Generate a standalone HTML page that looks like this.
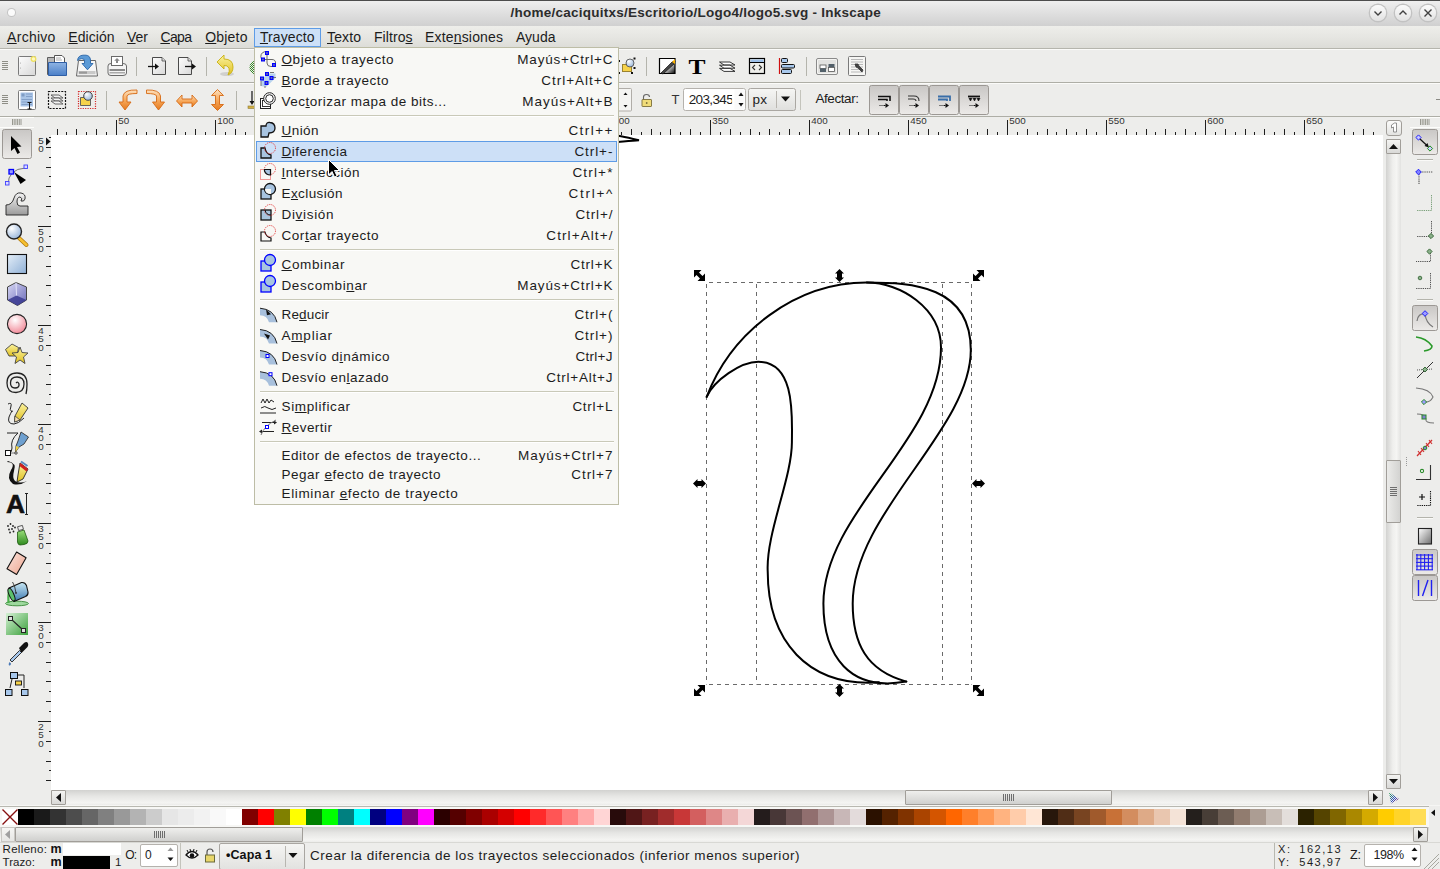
<!DOCTYPE html>
<html><head><meta charset="utf-8"><title>Inkscape</title>
<style>
html,body{margin:0;padding:0;width:1440px;height:869px;overflow:hidden;background:#ededeb;}
.r{position:absolute;box-sizing:border-box;}
svg.r{overflow:visible}
.t{position:absolute;white-space:nowrap;line-height:1;}
u{text-decoration:underline;text-underline-offset:1px;text-decoration-thickness:1px}
</style></head><body>
<div class="r" style="left:0px;top:0px;width:1440px;height:1px;background:#4d4d4d"></div>
<div class="r" style="left:0px;top:1px;width:1440px;height:25px;background:linear-gradient(#efefef,#e2e2e2 40%,#d0d0d0)"></div>
<div class="r" style="left:8px;top:9px;width:7px;height:7px;border-radius:50%;background:#fbfbfb;box-shadow:0 0 0 1px #c4c4c4"></div>
<div class="t" style="left:510.40px;top:5.87px;font-size:13.5px;font-weight:700;letter-spacing:0.251px;color:#2c2c2c;font-family:'Liberation Sans', sans-serif;">/home/caciquitxs/Escritorio/Logo4/logo5.svg - Inkscape</div>
<div class="r" style="left:1369.8px;top:5px;width:16px;height:16px;border-radius:50%;background:linear-gradient(#fbfbfb,#e2e2e2);box-shadow:0 0 0 1.4px #c2c2c2"></div>
<svg class="r" style="left:1367.8px;top:3px" width="20" height="20" viewBox="-10 -10 20 20"><path d="M-3.5,-1.5 L0,2 L3.5,-1.5" stroke="#404040" stroke-width="1.4" fill="none"/></svg>
<div class="r" style="left:1394.8px;top:5px;width:16px;height:16px;border-radius:50%;background:linear-gradient(#fbfbfb,#e2e2e2);box-shadow:0 0 0 1.4px #c2c2c2"></div>
<svg class="r" style="left:1392.8px;top:3px" width="20" height="20" viewBox="-10 -10 20 20"><path d="M-3.5,1.5 L0,-2 L3.5,1.5" stroke="#404040" stroke-width="1.4" fill="none"/></svg>
<div class="r" style="left:1419.8px;top:5px;width:16px;height:16px;border-radius:50%;background:linear-gradient(#fbfbfb,#e2e2e2);box-shadow:0 0 0 1.4px #c2c2c2"></div>
<svg class="r" style="left:1417.8px;top:3px" width="20" height="20" viewBox="-10 -10 20 20"><path d="M-3.5,-3.5 L3.5,3.5 M3.5,-3.5 L-3.5,3.5" stroke="#404040" stroke-width="1.4" fill="none"/></svg>
<div class="r" style="left:0px;top:26px;width:1440px;height:22px;background:linear-gradient(#eeeeea,#e6e6e2 50%,#dcdcd7)"></div>
<div class="r" style="left:0px;top:48px;width:1440px;height:1px;background:#b5b5ad"></div>
<div class="r" style="left:0px;top:49px;width:1440px;height:1px;background:#fbfbf9"></div>
<div class="r" style="left:254px;top:28px;width:67px;height:19px;background:#cde0f7;border:1px solid #5e9ce6"></div>
<div class="t" style="left:7.10px;top:30.15px;font-size:14px;font-weight:400;letter-spacing:0.269px;color:#1c1c1c;font-family:'Liberation Sans', sans-serif;"><u>A</u>rchivo</div>
<div class="t" style="left:68.30px;top:30.15px;font-size:14px;font-weight:400;letter-spacing:0.064px;color:#1c1c1c;font-family:'Liberation Sans', sans-serif;"><u>E</u>dición</div>
<div class="t" style="left:127.00px;top:30.15px;font-size:14px;font-weight:400;letter-spacing:-0.008px;color:#1c1c1c;font-family:'Liberation Sans', sans-serif;"><u>V</u>er</div>
<div class="t" style="left:160.40px;top:30.15px;font-size:14px;font-weight:400;letter-spacing:-0.623px;color:#1c1c1c;font-family:'Liberation Sans', sans-serif;"><u>C</u>apa</div>
<div class="t" style="left:205.20px;top:30.15px;font-size:14px;font-weight:400;letter-spacing:0.210px;color:#1c1c1c;font-family:'Liberation Sans', sans-serif;"><u>O</u>bjeto</div>
<div class="t" style="left:259.90px;top:30.15px;font-size:14px;font-weight:400;letter-spacing:0.094px;color:#1c1c1c;font-family:'Liberation Sans', sans-serif;"><u>T</u>rayecto</div>
<div class="t" style="left:327.00px;top:30.15px;font-size:14px;font-weight:400;letter-spacing:0.134px;color:#1c1c1c;font-family:'Liberation Sans', sans-serif;"><u>T</u>exto</div>
<div class="t" style="left:374.00px;top:30.15px;font-size:14px;font-weight:400;letter-spacing:0.065px;color:#1c1c1c;font-family:'Liberation Sans', sans-serif;">Filtro<u>s</u></div>
<div class="t" style="left:425.00px;top:30.15px;font-size:14px;font-weight:400;letter-spacing:0.173px;color:#1c1c1c;font-family:'Liberation Sans', sans-serif;">Exte<u>n</u>siones</div>
<div class="t" style="left:516.00px;top:30.15px;font-size:14px;font-weight:400;letter-spacing:0.014px;color:#1c1c1c;font-family:'Liberation Sans', sans-serif;">Ayuda</div>
<div class="r" style="left:0px;top:50px;width:1440px;height:32px;background:#ededeb"></div>
<div class="r" style="left:0px;top:82px;width:1440px;height:1px;background:#aeaea6"></div>
<div class="r" style="left:0px;top:83px;width:1440px;height:1px;background:#fbfbf9"></div>
<div class="r" style="left:0px;top:84px;width:1440px;height:32px;background:#ededeb"></div>
<div class="r" style="left:0px;top:116px;width:1440px;height:1px;background:#aeaea6"></div>
<div class="r" style="left:0px;top:117px;width:1440px;height:18px;background:#ededeb"></div>
<div class="r" style="left:0px;top:135px;width:51px;height:671px;background:#ededeb"></div>
<div class="r" style="left:51px;top:135px;width:1332px;height:655px;background:#ffffff"></div>
<div class="r" style="left:1383px;top:117px;width:57px;height:689px;background:#ededeb"></div>
<div class="r" style="left:0px;top:790px;width:1440px;height:79px;background:#ededeb"></div>
<svg class="r" style="left:0;top:0" width="1440" height="869"><g stroke="#1e1e1e" stroke-width="1"><line x1="57.5" y1="129" x2="57.5" y2="135" /><line x1="66.5" y1="132" x2="66.5" y2="135" /><line x1="76.5" y1="129" x2="76.5" y2="135" /><line x1="86.5" y1="132" x2="86.5" y2="135" /><line x1="96.5" y1="129" x2="96.5" y2="135" /><line x1="106.5" y1="132" x2="106.5" y2="135" /><line x1="116.5" y1="120" x2="116.5" y2="135" /><line x1="126.5" y1="132" x2="126.5" y2="135" /><line x1="136.5" y1="129" x2="136.5" y2="135" /><line x1="146.5" y1="132" x2="146.5" y2="135" /><line x1="156.5" y1="129" x2="156.5" y2="135" /><line x1="165.5" y1="132" x2="165.5" y2="135" /><line x1="175.5" y1="129" x2="175.5" y2="135" /><line x1="185.5" y1="132" x2="185.5" y2="135" /><line x1="195.5" y1="129" x2="195.5" y2="135" /><line x1="205.5" y1="132" x2="205.5" y2="135" /><line x1="215.5" y1="120" x2="215.5" y2="135" /><line x1="225.5" y1="132" x2="225.5" y2="135" /><line x1="235.5" y1="129" x2="235.5" y2="135" /><line x1="245.5" y1="132" x2="245.5" y2="135" /><line x1="255.5" y1="129" x2="255.5" y2="135" /><line x1="264.5" y1="132" x2="264.5" y2="135" /><line x1="274.5" y1="129" x2="274.5" y2="135" /><line x1="284.5" y1="132" x2="284.5" y2="135" /><line x1="294.5" y1="129" x2="294.5" y2="135" /><line x1="304.5" y1="132" x2="304.5" y2="135" /><line x1="314.5" y1="120" x2="314.5" y2="135" /><line x1="324.5" y1="132" x2="324.5" y2="135" /><line x1="334.5" y1="129" x2="334.5" y2="135" /><line x1="344.5" y1="132" x2="344.5" y2="135" /><line x1="354.5" y1="129" x2="354.5" y2="135" /><line x1="363.5" y1="132" x2="363.5" y2="135" /><line x1="373.5" y1="129" x2="373.5" y2="135" /><line x1="383.5" y1="132" x2="383.5" y2="135" /><line x1="393.5" y1="129" x2="393.5" y2="135" /><line x1="403.5" y1="132" x2="403.5" y2="135" /><line x1="413.5" y1="120" x2="413.5" y2="135" /><line x1="423.5" y1="132" x2="423.5" y2="135" /><line x1="433.5" y1="129" x2="433.5" y2="135" /><line x1="443.5" y1="132" x2="443.5" y2="135" /><line x1="453.5" y1="129" x2="453.5" y2="135" /><line x1="462.5" y1="132" x2="462.5" y2="135" /><line x1="472.5" y1="129" x2="472.5" y2="135" /><line x1="482.5" y1="132" x2="482.5" y2="135" /><line x1="492.5" y1="129" x2="492.5" y2="135" /><line x1="502.5" y1="132" x2="502.5" y2="135" /><line x1="512.5" y1="120" x2="512.5" y2="135" /><line x1="522.5" y1="132" x2="522.5" y2="135" /><line x1="532.5" y1="129" x2="532.5" y2="135" /><line x1="542.5" y1="132" x2="542.5" y2="135" /><line x1="552.5" y1="129" x2="552.5" y2="135" /><line x1="561.5" y1="132" x2="561.5" y2="135" /><line x1="571.5" y1="129" x2="571.5" y2="135" /><line x1="581.5" y1="132" x2="581.5" y2="135" /><line x1="591.5" y1="129" x2="591.5" y2="135" /><line x1="601.5" y1="132" x2="601.5" y2="135" /><line x1="611.5" y1="120" x2="611.5" y2="135" /><line x1="621.5" y1="132" x2="621.5" y2="135" /><line x1="631.5" y1="129" x2="631.5" y2="135" /><line x1="641.5" y1="132" x2="641.5" y2="135" /><line x1="651.5" y1="129" x2="651.5" y2="135" /><line x1="660.5" y1="132" x2="660.5" y2="135" /><line x1="670.5" y1="129" x2="670.5" y2="135" /><line x1="680.5" y1="132" x2="680.5" y2="135" /><line x1="690.5" y1="129" x2="690.5" y2="135" /><line x1="700.5" y1="132" x2="700.5" y2="135" /><line x1="710.5" y1="120" x2="710.5" y2="135" /><line x1="720.5" y1="132" x2="720.5" y2="135" /><line x1="730.5" y1="129" x2="730.5" y2="135" /><line x1="740.5" y1="132" x2="740.5" y2="135" /><line x1="750.5" y1="129" x2="750.5" y2="135" /><line x1="759.5" y1="132" x2="759.5" y2="135" /><line x1="769.5" y1="129" x2="769.5" y2="135" /><line x1="779.5" y1="132" x2="779.5" y2="135" /><line x1="789.5" y1="129" x2="789.5" y2="135" /><line x1="799.5" y1="132" x2="799.5" y2="135" /><line x1="809.5" y1="120" x2="809.5" y2="135" /><line x1="819.5" y1="132" x2="819.5" y2="135" /><line x1="829.5" y1="129" x2="829.5" y2="135" /><line x1="839.5" y1="132" x2="839.5" y2="135" /><line x1="849.5" y1="129" x2="849.5" y2="135" /><line x1="858.5" y1="132" x2="858.5" y2="135" /><line x1="868.5" y1="129" x2="868.5" y2="135" /><line x1="878.5" y1="132" x2="878.5" y2="135" /><line x1="888.5" y1="129" x2="888.5" y2="135" /><line x1="898.5" y1="132" x2="898.5" y2="135" /><line x1="908.5" y1="120" x2="908.5" y2="135" /><line x1="918.5" y1="132" x2="918.5" y2="135" /><line x1="928.5" y1="129" x2="928.5" y2="135" /><line x1="938.5" y1="132" x2="938.5" y2="135" /><line x1="948.5" y1="129" x2="948.5" y2="135" /><line x1="957.5" y1="132" x2="957.5" y2="135" /><line x1="967.5" y1="129" x2="967.5" y2="135" /><line x1="977.5" y1="132" x2="977.5" y2="135" /><line x1="987.5" y1="129" x2="987.5" y2="135" /><line x1="997.5" y1="132" x2="997.5" y2="135" /><line x1="1007.5" y1="120" x2="1007.5" y2="135" /><line x1="1017.5" y1="132" x2="1017.5" y2="135" /><line x1="1027.5" y1="129" x2="1027.5" y2="135" /><line x1="1037.5" y1="132" x2="1037.5" y2="135" /><line x1="1047.5" y1="129" x2="1047.5" y2="135" /><line x1="1056.5" y1="132" x2="1056.5" y2="135" /><line x1="1066.5" y1="129" x2="1066.5" y2="135" /><line x1="1076.5" y1="132" x2="1076.5" y2="135" /><line x1="1086.5" y1="129" x2="1086.5" y2="135" /><line x1="1096.5" y1="132" x2="1096.5" y2="135" /><line x1="1106.5" y1="120" x2="1106.5" y2="135" /><line x1="1116.5" y1="132" x2="1116.5" y2="135" /><line x1="1126.5" y1="129" x2="1126.5" y2="135" /><line x1="1136.5" y1="132" x2="1136.5" y2="135" /><line x1="1146.5" y1="129" x2="1146.5" y2="135" /><line x1="1155.5" y1="132" x2="1155.5" y2="135" /><line x1="1165.5" y1="129" x2="1165.5" y2="135" /><line x1="1175.5" y1="132" x2="1175.5" y2="135" /><line x1="1185.5" y1="129" x2="1185.5" y2="135" /><line x1="1195.5" y1="132" x2="1195.5" y2="135" /><line x1="1205.5" y1="120" x2="1205.5" y2="135" /><line x1="1215.5" y1="132" x2="1215.5" y2="135" /><line x1="1225.5" y1="129" x2="1225.5" y2="135" /><line x1="1235.5" y1="132" x2="1235.5" y2="135" /><line x1="1245.5" y1="129" x2="1245.5" y2="135" /><line x1="1254.5" y1="132" x2="1254.5" y2="135" /><line x1="1264.5" y1="129" x2="1264.5" y2="135" /><line x1="1274.5" y1="132" x2="1274.5" y2="135" /><line x1="1284.5" y1="129" x2="1284.5" y2="135" /><line x1="1294.5" y1="132" x2="1294.5" y2="135" /><line x1="1304.5" y1="120" x2="1304.5" y2="135" /><line x1="1314.5" y1="132" x2="1314.5" y2="135" /><line x1="1324.5" y1="129" x2="1324.5" y2="135" /><line x1="1334.5" y1="132" x2="1334.5" y2="135" /><line x1="1344.5" y1="129" x2="1344.5" y2="135" /><line x1="1353.5" y1="132" x2="1353.5" y2="135" /><line x1="1363.5" y1="129" x2="1363.5" y2="135" /><line x1="1373.5" y1="132" x2="1373.5" y2="135" /></g></svg>
<div class="t" style="left:118.30px;top:116.30px;font-size:9.8px;font-weight:400;letter-spacing:-0.061px;color:#333;font-family:'Liberation Sans', sans-serif;">50</div>
<div class="t" style="left:217.30px;top:116.30px;font-size:9.8px;font-weight:400;letter-spacing:0.054px;color:#333;font-family:'Liberation Sans', sans-serif;">100</div>
<div class="t" style="left:316.30px;top:116.30px;font-size:9.8px;font-weight:400;letter-spacing:0.054px;color:#333;font-family:'Liberation Sans', sans-serif;">150</div>
<div class="t" style="left:415.30px;top:116.30px;font-size:9.8px;font-weight:400;letter-spacing:0.054px;color:#333;font-family:'Liberation Sans', sans-serif;">200</div>
<div class="t" style="left:514.30px;top:116.30px;font-size:9.8px;font-weight:400;letter-spacing:0.054px;color:#333;font-family:'Liberation Sans', sans-serif;">250</div>
<div class="t" style="left:613.30px;top:116.30px;font-size:9.8px;font-weight:400;letter-spacing:0.054px;color:#333;font-family:'Liberation Sans', sans-serif;">300</div>
<div class="t" style="left:712.30px;top:116.30px;font-size:9.8px;font-weight:400;letter-spacing:0.054px;color:#333;font-family:'Liberation Sans', sans-serif;">350</div>
<div class="t" style="left:811.30px;top:116.30px;font-size:9.8px;font-weight:400;letter-spacing:0.054px;color:#333;font-family:'Liberation Sans', sans-serif;">400</div>
<div class="t" style="left:910.30px;top:116.30px;font-size:9.8px;font-weight:400;letter-spacing:0.054px;color:#333;font-family:'Liberation Sans', sans-serif;">450</div>
<div class="t" style="left:1009.30px;top:116.30px;font-size:9.8px;font-weight:400;letter-spacing:0.054px;color:#333;font-family:'Liberation Sans', sans-serif;">500</div>
<div class="t" style="left:1108.30px;top:116.30px;font-size:9.8px;font-weight:400;letter-spacing:0.054px;color:#333;font-family:'Liberation Sans', sans-serif;">550</div>
<div class="t" style="left:1207.30px;top:116.30px;font-size:9.8px;font-weight:400;letter-spacing:0.054px;color:#333;font-family:'Liberation Sans', sans-serif;">600</div>
<div class="t" style="left:1306.30px;top:116.30px;font-size:9.8px;font-weight:400;letter-spacing:0.054px;color:#333;font-family:'Liberation Sans', sans-serif;">650</div>
<svg class="r" style="left:0;top:0" width="1440" height="869"><g stroke="#1e1e1e" stroke-width="1"><line x1="49" y1="137.5" x2="51" y2="137.5" /><line x1="46" y1="147.5" x2="51" y2="147.5" /><line x1="49" y1="157.5" x2="51" y2="157.5" /><line x1="46" y1="167.5" x2="51" y2="167.5" /><line x1="49" y1="176.5" x2="51" y2="176.5" /><line x1="46" y1="186.5" x2="51" y2="186.5" /><line x1="49" y1="196.5" x2="51" y2="196.5" /><line x1="46" y1="206.5" x2="51" y2="206.5" /><line x1="49" y1="216.5" x2="51" y2="216.5" /><line x1="38" y1="226.5" x2="51" y2="226.5" /><line x1="49" y1="236.5" x2="51" y2="236.5" /><line x1="46" y1="246.5" x2="51" y2="246.5" /><line x1="49" y1="256.5" x2="51" y2="256.5" /><line x1="46" y1="266.5" x2="51" y2="266.5" /><line x1="49" y1="275.5" x2="51" y2="275.5" /><line x1="46" y1="285.5" x2="51" y2="285.5" /><line x1="49" y1="295.5" x2="51" y2="295.5" /><line x1="46" y1="305.5" x2="51" y2="305.5" /><line x1="49" y1="315.5" x2="51" y2="315.5" /><line x1="38" y1="325.5" x2="51" y2="325.5" /><line x1="49" y1="335.5" x2="51" y2="335.5" /><line x1="46" y1="345.5" x2="51" y2="345.5" /><line x1="49" y1="355.5" x2="51" y2="355.5" /><line x1="46" y1="365.5" x2="51" y2="365.5" /><line x1="49" y1="374.5" x2="51" y2="374.5" /><line x1="46" y1="384.5" x2="51" y2="384.5" /><line x1="49" y1="394.5" x2="51" y2="394.5" /><line x1="46" y1="404.5" x2="51" y2="404.5" /><line x1="49" y1="414.5" x2="51" y2="414.5" /><line x1="38" y1="424.5" x2="51" y2="424.5" /><line x1="49" y1="434.5" x2="51" y2="434.5" /><line x1="46" y1="444.5" x2="51" y2="444.5" /><line x1="49" y1="454.5" x2="51" y2="454.5" /><line x1="46" y1="464.5" x2="51" y2="464.5" /><line x1="49" y1="473.5" x2="51" y2="473.5" /><line x1="46" y1="483.5" x2="51" y2="483.5" /><line x1="49" y1="493.5" x2="51" y2="493.5" /><line x1="46" y1="503.5" x2="51" y2="503.5" /><line x1="49" y1="513.5" x2="51" y2="513.5" /><line x1="38" y1="523.5" x2="51" y2="523.5" /><line x1="49" y1="533.5" x2="51" y2="533.5" /><line x1="46" y1="543.5" x2="51" y2="543.5" /><line x1="49" y1="553.5" x2="51" y2="553.5" /><line x1="46" y1="563.5" x2="51" y2="563.5" /><line x1="49" y1="572.5" x2="51" y2="572.5" /><line x1="46" y1="582.5" x2="51" y2="582.5" /><line x1="49" y1="592.5" x2="51" y2="592.5" /><line x1="46" y1="602.5" x2="51" y2="602.5" /><line x1="49" y1="612.5" x2="51" y2="612.5" /><line x1="38" y1="622.5" x2="51" y2="622.5" /><line x1="49" y1="632.5" x2="51" y2="632.5" /><line x1="46" y1="642.5" x2="51" y2="642.5" /><line x1="49" y1="652.5" x2="51" y2="652.5" /><line x1="46" y1="662.5" x2="51" y2="662.5" /><line x1="49" y1="671.5" x2="51" y2="671.5" /><line x1="46" y1="681.5" x2="51" y2="681.5" /><line x1="49" y1="691.5" x2="51" y2="691.5" /><line x1="46" y1="701.5" x2="51" y2="701.5" /><line x1="49" y1="711.5" x2="51" y2="711.5" /><line x1="38" y1="721.5" x2="51" y2="721.5" /><line x1="49" y1="731.5" x2="51" y2="731.5" /><line x1="46" y1="741.5" x2="51" y2="741.5" /><line x1="49" y1="751.5" x2="51" y2="751.5" /><line x1="46" y1="761.5" x2="51" y2="761.5" /><line x1="49" y1="770.5" x2="51" y2="770.5" /><line x1="46" y1="780.5" x2="51" y2="780.5" /></g></svg>
<div class="t" style="left:38.30px;top:227.30px;font-size:9.8px;font-weight:400;letter-spacing:0.000px;color:#333;font-family:'Liberation Sans', sans-serif;">5</div>
<div class="t" style="left:38.30px;top:235.40px;font-size:9.8px;font-weight:400;letter-spacing:0.000px;color:#333;font-family:'Liberation Sans', sans-serif;">0</div>
<div class="t" style="left:38.30px;top:243.50px;font-size:9.8px;font-weight:400;letter-spacing:0.000px;color:#333;font-family:'Liberation Sans', sans-serif;">0</div>
<div class="t" style="left:38.30px;top:326.30px;font-size:9.8px;font-weight:400;letter-spacing:0.000px;color:#333;font-family:'Liberation Sans', sans-serif;">4</div>
<div class="t" style="left:38.30px;top:334.40px;font-size:9.8px;font-weight:400;letter-spacing:0.000px;color:#333;font-family:'Liberation Sans', sans-serif;">5</div>
<div class="t" style="left:38.30px;top:342.50px;font-size:9.8px;font-weight:400;letter-spacing:0.000px;color:#333;font-family:'Liberation Sans', sans-serif;">0</div>
<div class="t" style="left:38.30px;top:425.30px;font-size:9.8px;font-weight:400;letter-spacing:0.000px;color:#333;font-family:'Liberation Sans', sans-serif;">4</div>
<div class="t" style="left:38.30px;top:433.40px;font-size:9.8px;font-weight:400;letter-spacing:0.000px;color:#333;font-family:'Liberation Sans', sans-serif;">0</div>
<div class="t" style="left:38.30px;top:441.50px;font-size:9.8px;font-weight:400;letter-spacing:0.000px;color:#333;font-family:'Liberation Sans', sans-serif;">0</div>
<div class="t" style="left:38.30px;top:524.30px;font-size:9.8px;font-weight:400;letter-spacing:0.000px;color:#333;font-family:'Liberation Sans', sans-serif;">3</div>
<div class="t" style="left:38.30px;top:532.40px;font-size:9.8px;font-weight:400;letter-spacing:0.000px;color:#333;font-family:'Liberation Sans', sans-serif;">5</div>
<div class="t" style="left:38.30px;top:540.50px;font-size:9.8px;font-weight:400;letter-spacing:0.000px;color:#333;font-family:'Liberation Sans', sans-serif;">0</div>
<div class="t" style="left:38.30px;top:623.30px;font-size:9.8px;font-weight:400;letter-spacing:0.000px;color:#333;font-family:'Liberation Sans', sans-serif;">3</div>
<div class="t" style="left:38.30px;top:631.40px;font-size:9.8px;font-weight:400;letter-spacing:0.000px;color:#333;font-family:'Liberation Sans', sans-serif;">0</div>
<div class="t" style="left:38.30px;top:639.50px;font-size:9.8px;font-weight:400;letter-spacing:0.000px;color:#333;font-family:'Liberation Sans', sans-serif;">0</div>
<div class="t" style="left:38.30px;top:722.30px;font-size:9.8px;font-weight:400;letter-spacing:0.000px;color:#333;font-family:'Liberation Sans', sans-serif;">2</div>
<div class="t" style="left:38.30px;top:730.40px;font-size:9.8px;font-weight:400;letter-spacing:0.000px;color:#333;font-family:'Liberation Sans', sans-serif;">5</div>
<div class="t" style="left:38.30px;top:738.50px;font-size:9.8px;font-weight:400;letter-spacing:0.000px;color:#333;font-family:'Liberation Sans', sans-serif;">0</div>
<div class="t" style="left:38.30px;top:135.90px;font-size:9.8px;font-weight:400;letter-spacing:0.000px;color:#333;font-family:'Liberation Sans', sans-serif;">5</div>
<div class="t" style="left:38.30px;top:144.10px;font-size:9.8px;font-weight:400;letter-spacing:0.000px;color:#333;font-family:'Liberation Sans', sans-serif;">0</div>
<svg class="r" style="left:0;top:0" width="60" height="160"><path d="M46,137.5 L50.5,141.5 L46,145.5 Z" fill="#111"/></svg>
<svg class="r" style="left:0;top:0" width="1440" height="869"><g stroke="#6a6a6a" stroke-width="1" stroke-dasharray="4,4" fill="none"><line x1="706.5" y1="282.5" x2="971.5" y2="282.5" stroke-dashoffset="5.5"/><line x1="706.5" y1="684.5" x2="971.5" y2="684.5" stroke-dashoffset="5.5"/><line x1="706.5" y1="282.5" x2="706.5" y2="684.5" stroke-dashoffset="6.5"/><line x1="756.5" y1="282.5" x2="756.5" y2="684.5" stroke-dashoffset="6.5"/><line x1="942.5" y1="282.5" x2="942.5" y2="684.5" stroke-dashoffset="6.5"/><line x1="971.5" y1="282.5" x2="971.5" y2="684.5" stroke-dashoffset="6.5"/></g><g stroke="#000" stroke-width="2" fill="none" stroke-linecap="round"><path d="M706.7,396.8 C731.6,331.3 795.9,282.5 866.8,282.5 C899.6,282.5 941.0,307.6 941.0,347.5 C941.0,439.2 823.4,512.4 823.4,603.6 C823.4,656.4 849.8,691.8 906.3,681.6" /><path d="M866.8,282.5 C912.2,282.5 970.8,285.9 970.8,350.0 C970.8,430.5 852.7,512.9 852.7,603.6 C852.7,643.2 866.1,670.6 906.3,681.6" /><path d="M706.7,396.8 C713.9,380.5 740.6,361.8 758.4,361.8 C796.1,361.8 791.9,418.0 791.9,442.2 C791.9,478.0 766.0,533.3 767.7,571.1 C767.7,640.8 807.6,687.3 878.9,682.3" /></g><path d="M618,135.8 C626,137 633,139 639,140.3 C633,140.6 626,141.3 618,142" stroke="#000" stroke-width="2" fill="none"/></svg>
<svg class="r" style="left:0;top:0" width="1440" height="869"><g transform="translate(699.5,275.5) rotate(0)"><path d="M-5.5,-5.5 L2,-5.5 L-0.5,-3 L3,0.5 L5.5,-2 L5.5,5.5 L-2,5.5 L0.5,3 L-3,-0.5 L-5.5,2 Z" fill="#000"/></g><g transform="translate(978.5,275.5) rotate(90)"><path d="M-5.5,-5.5 L2,-5.5 L-0.5,-3 L3,0.5 L5.5,-2 L5.5,5.5 L-2,5.5 L0.5,3 L-3,-0.5 L-5.5,2 Z" fill="#000"/></g><g transform="translate(699.5,690.5) rotate(90)"><path d="M-5.5,-5.5 L2,-5.5 L-0.5,-3 L3,0.5 L5.5,-2 L5.5,5.5 L-2,5.5 L0.5,3 L-3,-0.5 L-5.5,2 Z" fill="#000"/></g><g transform="translate(978.5,690.5) rotate(0)"><path d="M-5.5,-5.5 L2,-5.5 L-0.5,-3 L3,0.5 L5.5,-2 L5.5,5.5 L-2,5.5 L0.5,3 L-3,-0.5 L-5.5,2 Z" fill="#000"/></g><g transform="translate(839.5,275.5) rotate(0)"><path d="M0,-6.5 L4.5,-2 L2.5,-2 L2.5,2 L4.5,2 L0,6.5 L-4.5,2 L-2.5,2 L-2.5,-2 L-4.5,-2 Z" fill="#000"/></g><g transform="translate(839.5,690.5) rotate(0)"><path d="M0,-6.5 L4.5,-2 L2.5,-2 L2.5,2 L4.5,2 L0,6.5 L-4.5,2 L-2.5,2 L-2.5,-2 L-4.5,-2 Z" fill="#000"/></g><g transform="translate(699.5,483.5) rotate(90)"><path d="M0,-6.5 L4.5,-2 L2.5,-2 L2.5,2 L4.5,2 L0,6.5 L-4.5,2 L-2.5,2 L-2.5,-2 L-4.5,-2 Z" fill="#000"/></g><g transform="translate(978.5,483.5) rotate(90)"><path d="M0,-6.5 L4.5,-2 L2.5,-2 L2.5,2 L4.5,2 L0,6.5 L-4.5,2 L-2.5,2 L-2.5,-2 L-4.5,-2 Z" fill="#000"/></g></svg>
<svg class="r" style="left:0;top:0" width="1440" height="869"><defs>
<linearGradient id="gPaper" x1="0" y1="0" x2="1" y2="1"><stop offset="0" stop-color="#fdfdfd"/><stop offset="1" stop-color="#d8d8d8"/></linearGradient>
<linearGradient id="gBlue" x1="0" y1="0" x2="0" y2="1"><stop offset="0" stop-color="#8fb4e3"/><stop offset="1" stop-color="#4a7fc8"/></linearGradient>
<linearGradient id="gBlueL" x1="0" y1="0" x2="1" y2="1"><stop offset="0" stop-color="#e4eef8"/><stop offset="1" stop-color="#8fb0d6"/></linearGradient>
<linearGradient id="gOrange" x1="0" y1="0" x2="0" y2="1"><stop offset="0" stop-color="#fde2c0"/><stop offset="0.5" stop-color="#f7a95c"/><stop offset="1" stop-color="#e57a1e"/></linearGradient>
<linearGradient id="gYellow" x1="0" y1="0" x2="0" y2="1"><stop offset="0" stop-color="#fbf3a0"/><stop offset="1" stop-color="#e0c020"/></linearGradient>
<linearGradient id="gBtn" x1="0" y1="0" x2="0" y2="1"><stop offset="0" stop-color="#c9c7c5"/><stop offset="1" stop-color="#eceae8"/></linearGradient>
<linearGradient id="gGray" x1="0" y1="0" x2="0" y2="1"><stop offset="0" stop-color="#f4f4f4"/><stop offset="1" stop-color="#9a9a9a"/></linearGradient>
<linearGradient id="gPurple" x1="0" y1="0" x2="1" y2="1"><stop offset="0" stop-color="#d8d8f4"/><stop offset="1" stop-color="#6a6ab8"/></linearGradient>
<radialGradient id="gPink" cx="0.4" cy="0.3" r="0.8"><stop offset="0" stop-color="#ffffff"/><stop offset="1" stop-color="#f07c8c"/></radialGradient>
<radialGradient id="gLens" cx="0.35" cy="0.3" r="0.8"><stop offset="0" stop-color="#ffffff"/><stop offset="1" stop-color="#90b0d8"/></radialGradient>
<linearGradient id="gGreen" x1="0" y1="0" x2="1" y2="1"><stop offset="0" stop-color="#d4f0d4"/><stop offset="1" stop-color="#3aa03a"/></linearGradient>
<linearGradient id="gGreen2" x1="0" y1="0" x2="0" y2="1"><stop offset="0" stop-color="#9ce07c"/><stop offset="1" stop-color="#2e8a1e"/></linearGradient>
<linearGradient id="gBW" x1="0" y1="0" x2="1" y2="1"><stop offset="0" stop-color="#ffffff"/><stop offset="0.5" stop-color="#ffffff"/><stop offset="1" stop-color="#000000"/></linearGradient>
<pattern id="chkG" x="0" y="0" width="2" height="2" patternUnits="userSpaceOnUse"><rect width="1" height="1" fill="#3a8a2a"/><rect x="1" y="1" width="1" height="1" fill="#3a8a2a"/></pattern>
<linearGradient id="gPage" x1="0" y1="0" x2="1" y2="1"><stop offset="0" stop-color="#ffffff"/><stop offset="1" stop-color="#6e6e6e"/></linearGradient>
<linearGradient id="gBtnH" x1="0" y1="0" x2="0" y2="1"><stop offset="0" stop-color="#f6f6f4"/><stop offset="1" stop-color="#dfdfdd"/></linearGradient></defs><line x1="2" y1="61.5" x2="8" y2="61.5" stroke="#8e8e86" stroke-width="1"/><line x1="2" y1="63.5" x2="8" y2="63.5" stroke="#8e8e86" stroke-width="1"/><line x1="2" y1="65.5" x2="8" y2="65.5" stroke="#8e8e86" stroke-width="1"/><line x1="2" y1="67.5" x2="8" y2="67.5" stroke="#8e8e86" stroke-width="1"/><line x1="2" y1="69.5" x2="8" y2="69.5" stroke="#8e8e86" stroke-width="1"/><line x1="2" y1="95.5" x2="8" y2="95.5" stroke="#8e8e86" stroke-width="1"/><line x1="2" y1="97.5" x2="8" y2="97.5" stroke="#8e8e86" stroke-width="1"/><line x1="2" y1="99.5" x2="8" y2="99.5" stroke="#8e8e86" stroke-width="1"/><line x1="2" y1="101.5" x2="8" y2="101.5" stroke="#8e8e86" stroke-width="1"/><line x1="2" y1="103.5" x2="8" y2="103.5" stroke="#8e8e86" stroke-width="1"/><rect x="18.5" y="56.5" width="17" height="19" rx="1" fill="url(#gPaper)" stroke="#7a7a7a"/><circle cx="33.5" cy="59" r="2.3" fill="#fff8c0" stroke="#ede060" stroke-width="1.3"/><circle cx="20.5" cy="63" r="0.5" fill="#999"/><circle cx="20.5" cy="68" r="0.5" fill="#999"/><path d="M47.5,57.5 L55.5,57.5 L55.5,74.5 L47.5,74.5 Z" fill="#b8b8b8" stroke="#5e5e5e"/><path d="M54.5,55.5 L62,55.5 L64.5,58 L64.5,64 L54.5,64 Z" fill="#fff" stroke="#555"/><path d="M56,58 L61,58 M56,60 L62,60" stroke="#999" stroke-width="0.8"/><path d="M48.5,62.5 L66.5,62.5 L66.5,75.5 L48.5,75.5 Z" fill="url(#gBlue)" stroke="#2f5fa6"/><path d="M78.5,60.5 L95.5,60.5 L97.5,76 L76.5,76 Z" fill="#f6f6f6" stroke="#666" stroke-width="1"/><rect x="78.5" y="71" width="17" height="3.2" fill="#c8c8c8"/><rect x="79" y="71.5" width="8" height="2.2" fill="#999"/><path d="M77.5,60.5 Q78,55.5 83,55.2 L86,55.2 Q90,55.5 90.5,60 L90.5,63.5 L93,63.5 L87.5,69.8 L82,63.5 L84.5,63.5 L84.5,60.5 Q84,58.5 81.5,58.7 Q79,59 77.5,60.5 Z" fill="#5b9ad6" stroke="#2a65a8" stroke-width="0.9"/><path d="M108,66 Q108,63.5 111,63.5 L123,63.5 Q126.5,63.5 126.5,66 L126.5,73 Q126.5,75.5 123,75.5 L111,75.5 Q108,75.5 108,73 Z" fill="#f4f4f4" stroke="#6a6a6a" stroke-width="1"/><rect x="109.5" y="69" width="15.5" height="2" fill="#8a8a8a"/><rect x="109.5" y="72" width="15.5" height="1.5" fill="#aaa"/><rect x="111.5" y="56.5" width="11" height="9" fill="#fff" stroke="#6a6a6a"/><path d="M117,58 L119.8,60.8 L118,60.8 L118,63 L116,63 L116,60.8 L114.2,60.8 Z" fill="#888"/><line x1="136.5" y1="57" x2="136.5" y2="76" stroke="#b4b4ac"/><line x1="206.5" y1="57" x2="206.5" y2="76" stroke="#b4b4ac"/><path d="M152.5,57.5 L162,57.5 L165.5,61 L165.5,74.5 L152.5,74.5 Z" fill="url(#gPaper)" stroke="#4a4a4a"/><path d="M162,57.5 L162,61 L165.5,61" fill="#ddd" stroke="#4a4a4a" stroke-width="0.8"/><path d="M148,66.5 L156,66.5" stroke="#111" stroke-width="1.3"/><path d="M155,63.5 L159,66.5 L155,69.5 Z" fill="#111"/><path d="M178.5,57.5 L188,57.5 L191.5,61 L191.5,74.5 L178.5,74.5 Z" fill="url(#gPaper)" stroke="#4a4a4a"/><path d="M188,57.5 L188,61 L191.5,61" fill="#ddd" stroke="#4a4a4a" stroke-width="0.8"/><path d="M185,66.5 L193,66.5" stroke="#111" stroke-width="1.3"/><path d="M192,63.5 L196,66.5 L192,69.5 Z" fill="#111"/><ellipse cx="227" cy="74" rx="7" ry="2" fill="#000" opacity="0.12"/><path d="M217,62 L224,55 L224,59 Q233,59 233,67 Q233,73 228,75 Q230,71 229,68 Q227,65 224,65.5 L224,69 Z" fill="url(#gYellow)" stroke="#c8b010" stroke-width="0.9"/><path d="M255,60.5 Q249.5,62 249.5,67.5 Q249.5,73 255,74.5 Z" fill="url(#chkG)"/><rect x="18.5" y="90.5" width="17" height="19" rx="1" fill="#fff" stroke="#7a7a7a"/><rect x="20.5" y="92.5" width="12.5" height="14" fill="#a9c4e6"/><rect x="21.5" y="93.5" width="3" height="3" fill="#7f9cc4"/><line x1="26" y1="94" x2="32" y2="94" stroke="#7f9cc4" stroke-width="0.9"/><line x1="26" y1="96.5" x2="32" y2="96.5" stroke="#7f9cc4" stroke-width="0.9"/><line x1="21.5" y1="99.5" x2="32" y2="99.5" stroke="#7f9cc4" stroke-width="0.9"/><line x1="21.5" y1="102" x2="32" y2="102" stroke="#7f9cc4" stroke-width="0.9"/><line x1="21.5" y1="104.5" x2="32" y2="104.5" stroke="#7f9cc4" stroke-width="0.9"/><path d="M27.5,102.5 L31.5,102.5 M29.5,102.5 L29.5,109 M27.5,109 L31.5,109" stroke="#111" stroke-width="1"/><rect x="48.5" y="91.5" width="17" height="17" fill="none" stroke="#111" stroke-width="1.2" stroke-dasharray="2,1.2"/><path d="M51,95 L59,95 L63,98 L55,98 Z" fill="#f4f4f4" stroke="#555" stroke-width="0.9"/><path d="M51,98 L59,98 L63,101 L55,101 Z" fill="#f4f4f4" stroke="#555" stroke-width="0.9"/><path d="M51,101 L59,101 L63,104 L55,104 Z" fill="#f4f4f4" stroke="#555" stroke-width="0.9"/><rect x="78.5" y="91.5" width="17" height="17" fill="none" stroke="#d42a2a" stroke-width="1.2" stroke-dasharray="1.2,1.2"/><path d="M80.5,97.5 L85,97.5 L86,99.5 L90.5,99.5 L90.5,105.5 L80.5,105.5 Z" fill="#f6d24a" stroke="#555" stroke-width="0.9"/><circle cx="88" cy="96" r="4.3" fill="url(#gLens)" stroke="#444" stroke-width="1"/><line x1="106.5" y1="91" x2="106.5" y2="110" stroke="#b4b4ac"/><line x1="236.5" y1="91" x2="236.5" y2="110" stroke="#b4b4ac"/><path d="M137,90 Q124,89.5 123,96 L123,102 L119,102 L125,110 L131,102 L127,102 L127,96 Q127.5,93.5 137,93.5 Z" fill="url(#gOrange)" stroke="#d66a14" stroke-width="0.9"/><path d="M146.5,90 Q159.5,89.5 160.5,96 L160.5,102 L164.5,102 L158.5,110 L152.5,102 L156.5,102 L156.5,96 Q156,93.5 146.5,93.5 Z" fill="url(#gOrange)" stroke="#d66a14" stroke-width="0.9"/><path d="M176.5,101 L182,95 L182,99 L192,99 L192,95 L197.5,101 L192,107 L192,103 L182,103 L182,107 Z" fill="url(#gOrange)" stroke="#d66a14" stroke-width="0.9"/><path d="M217.5,89.5 L223.5,95.5 L219.5,95.5 L219.5,104.5 L223.5,104.5 L217.5,110.5 L211.5,104.5 L215.5,104.5 L215.5,95.5 L211.5,95.5 Z" fill="url(#gOrange)" stroke="#d66a14" stroke-width="0.9"/><line x1="252" y1="91" x2="252" y2="103" stroke="#111" stroke-width="1.2"/><path d="M249.5,101 L252,105 L254.5,101 Z" fill="#111"/><rect x="248" y="106" width="7" height="2.5" fill="#d4b040" stroke="#8a7a3a" stroke-width="0.6"/><rect x="0" y="117" width="34" height="1" fill="#fdfdfb"/><rect x="0" y="127" width="34" height="1" fill="#fdfdfb"/><line x1="12.5" y1="119" x2="12.5" y2="125" stroke="#8e8e86" stroke-width="0.9"/><line x1="14.2" y1="119" x2="14.2" y2="125" stroke="#8e8e86" stroke-width="0.9"/><line x1="15.9" y1="119" x2="15.9" y2="125" stroke="#8e8e86" stroke-width="0.9"/><line x1="17.6" y1="119" x2="17.6" y2="125" stroke="#8e8e86" stroke-width="0.9"/><line x1="19.3" y1="119" x2="19.3" y2="125" stroke="#8e8e86" stroke-width="0.9"/><line x1="21.0" y1="119" x2="21.0" y2="125" stroke="#8e8e86" stroke-width="0.9"/><rect x="2.5" y="129.5" width="29" height="29" rx="2" fill="url(#gBtn)" stroke="#9c9894"/><path d="M11,136 L11,151 L14.5,148 L17.5,154 L20,152.5 L17,147 L21.5,146.5 Z" fill="#000"/><path d="M8,185 Q8,169 25.5,168" stroke="#777" stroke-width="1" fill="none"/><rect x="9" y="169.5" width="4.5" height="4.5" fill="#9c9cff" stroke="#0000ff" stroke-width="1.3"/><rect x="24" y="165" width="3.5" height="3.5" fill="#dcdcff" stroke="#4040ff" stroke-width="0.9"/><rect x="5.5" y="181.5" width="3.5" height="3.5" fill="#dcdcff" stroke="#4040ff" stroke-width="0.9"/><path d="M14,172 L26,180 L20.5,184 Z" fill="#000"/><path d="M6,205 Q12,205 14,198 Q16,192 21,193 Q26,194 25,199 Q24,202 21,201 Q23,198 20,197 Q17,197 17,202 Q17,206 20,206 L28,206 L28,215 L6,215 Z" fill="url(#gGray)" stroke="#222" stroke-width="0.9"/><line x1="19" y1="238" x2="26.5" y2="245" stroke="#b07a10" stroke-width="4" stroke-linecap="round"/><line x1="19" y1="238" x2="26.5" y2="245" stroke="#f6c030" stroke-width="2.4" stroke-linecap="round"/><circle cx="14" cy="231.5" r="7.5" fill="url(#gLens)" stroke="#222" stroke-width="1.4"/><rect x="7.5" y="254.5" width="19" height="19" fill="url(#gBlueL)" stroke="#111" stroke-width="1.1"/><path d="M16,282.5 L26.5,287 L26.5,300 L17.5,305.5 L7.5,300 L7.5,287 Z" fill="url(#gPurple)" stroke="#444" stroke-width="1"/><path d="M17.5,305.5 L26.5,300 L16.5,295.5 L7.5,300 Z" fill="#3a3a90" opacity="0.85"/><path d="M16,282.5 L16.5,295.5" stroke="#f0f0ff" stroke-width="0.8"/><circle cx="17" cy="324" r="9.6" fill="url(#gPink)" stroke="#222" stroke-width="1.1"/><path d="M5.5,349.5 L12,344 L18.5,347.5 L17,356 L9,356 Z" fill="url(#gYellow)" stroke="#444" stroke-width="0.9"/><path d="M20,347 L22,352.5 L28,353 L23.5,357 L25,363.5 L20,360 L15,363.5 L16.5,357 L12,353 L18,352.5 Z" fill="url(#gYellow)" stroke="#444" stroke-width="0.9"/><path d="M16,383 Q18,381 19,384 Q19.5,388 15,388 Q10.5,388 10.5,383 Q10.5,377 17,377 Q24,377 24,384 Q24,392 16,392.5 Q7,392.5 7,383 Q7,373 17,373 Q27,373 27,384 Q27,390 26,394" fill="none" stroke="#222" stroke-width="1.3"/><path d="M8,404 Q12,402 11,406 Q9,410 12,412 Q13,408 9,417 Q7,424 14,424 Q18,424 24,418" fill="none" stroke="#222" stroke-width="1"/><path d="M22,403 L28,408 L20,420 L14.5,422 L15,416 Z" fill="url(#gYellow)" stroke="#333" stroke-width="0.9"/><path d="M14.5,422 L15,416 L20,420 Z" fill="#f6e0b0" stroke="#333" stroke-width="0.7"/><path d="M7,433 L18,433 Q10,440 12,448 Q12,452 9,454" fill="none" stroke="#222" stroke-width="1"/><rect x="5.5" y="450.5" width="5" height="5" fill="#fff" stroke="#111"/><path d="M10.5,453 L15,453" stroke="#111" stroke-dasharray="1,1"/><circle cx="16" cy="453" r="1.2" fill="#fff" stroke="#111" stroke-width="0.8"/><path d="M21,432 L28.5,437 L24,444 L19,447 L15.5,452 L16,446 L18,441 Z" fill="#6ea0d0" stroke="#333" stroke-width="0.9"/><path d="M16,446 L19,447 L15.5,452 Z" fill="#f0d040"/><path d="M7,462 Q16,462 11,470 Q6,479 13,484 Q20,486 27,481 Q20,484 15,481 Q12,478 14,471 Q17,463 8,461 Z" fill="#111"/><path d="M20,463 L28,469 L23,479 L17,482 L18,475 Z" fill="url(#gYellow)" stroke="#222" stroke-width="0.9"/><path d="M20.5,463 L28,469 L26.5,471.5 L19.5,466 Z" fill="#d02020"/><path d="M21,461.5 L27.5,466" stroke="#5a8ac0" stroke-width="2"/><text x="6" y="513" font-family="Liberation Sans" font-weight="700" font-size="26.5" fill="#111" stroke="#111" stroke-width="0.6" textLength="19" lengthAdjust="spacingAndGlyphs">A</text><path d="M25,493.5 L28,493.5 M26.5,493.5 L26.5,514.5 M25,514.5 L28,514.5" stroke="#222" stroke-width="1"/><circle cx="8" cy="526" r="0.9" fill="#222"/><circle cx="10.5" cy="524" r="0.9" fill="#222"/><circle cx="13" cy="526" r="0.9" fill="#222"/><circle cx="9" cy="529.5" r="0.9" fill="#222"/><circle cx="12" cy="529" r="0.9" fill="#222"/><circle cx="15" cy="527.5" r="0.9" fill="#222"/><circle cx="10" cy="532.5" r="0.9" fill="#222"/><circle cx="13.5" cy="531.5" r="0.9" fill="#222"/><path d="M17.5,532 L24,530 L28,541 Q28,544 24,544.5 L20,545 Q18,545 17.5,542 Z" fill="url(#gGreen2)" stroke="#1e5a10" stroke-width="0.8"/><rect x="18" y="526" width="5" height="4" fill="#eee" stroke="#444" stroke-width="0.8" transform="rotate(-15 20.5 528)"/><linearGradient id="gEr" x1="0" y1="0" x2="1" y2="1"><stop offset="0" stop-color="#fbe6de"/><stop offset="1" stop-color="#eea48e"/></linearGradient><path d="M16.6,552 L26.1,557.8 L16.6,574.5 L7,568.7 Z" fill="url(#gEr)" stroke="#111" stroke-width="1.1" stroke-linejoin="round"/><ellipse cx="17" cy="603.5" rx="11.5" ry="2.3" fill="#9ed89e" stroke="#3a8a3a" stroke-width="0.9"/><path d="M9,590 Q8,597 8.5,603" stroke="#4ab04a" stroke-width="2.2" fill="none"/><linearGradient id="gBk" x1="0" y1="0" x2="0" y2="1"><stop offset="0" stop-color="#c8e8f4"/><stop offset="1" stop-color="#3c78b0"/></linearGradient><path d="M9,588 L21.5,582.5 Q25,582 26.5,585.5 L28,592 Q28.5,595 25.5,596.5 L14,601.5 Z" fill="url(#gBk)" stroke="#111" stroke-width="1.1" stroke-linejoin="round"/><ellipse cx="11.5" cy="594.7" rx="2.3" ry="6.8" transform="rotate(-24 11.5 594.7)" fill="#5cc06c" stroke="#111" stroke-width="1"/><path d="M12.5,582 L14.5,586 L16,593" stroke="#333" stroke-width="0.9" fill="none"/><circle cx="16" cy="593" r="0.9" fill="#333"/><rect x="6" y="613" width="22" height="22" fill="url(#gGreen)"/><line x1="11" y1="619" x2="23" y2="630" stroke="#222" stroke-width="1.1"/><rect x="8.5" y="616.5" width="4" height="4" fill="#ddd" stroke="#222"/><rect x="21.5" y="628.5" width="4" height="4" fill="#ddd" stroke="#222"/><path d="M10,660 L19.5,650.5 L21.5,652.5 L12,662 Z" fill="#a8c8ec" stroke="#222" stroke-width="0.9"/><path d="M19,648 L24,643 Q27,641 28,643.5 Q29,646 26,648.5 L21.5,653 Z" fill="#111"/><path d="M9.5,662 Q8,664 9,665.5 Q11,666 11,663.5 Z" fill="#4a7ab8"/><path d="M12,679 L10,688 M17,675 L24,675 L24,688" stroke="#222" stroke-width="1" fill="none"/><rect x="10.5" y="672.5" width="7" height="6" fill="#a8c8ec" stroke="#111"/><rect x="15.5" y="681" width="6" height="4" fill="#f6d24a" stroke="#111" stroke-width="0.9"/><rect x="5.5" y="689.5" width="6.5" height="6" fill="#a8c8ec" stroke="#111"/><rect x="21.5" y="689.5" width="6.5" height="6" fill="#a8c8ec" stroke="#111"/><rect x="1410" y="117" width="30" height="1" fill="#fdfdfb"/><rect x="1410" y="127" width="30" height="1" fill="#fdfdfb"/><line x1="1420.5" y1="119" x2="1420.5" y2="125" stroke="#8e8e86" stroke-width="0.9"/><line x1="1422.2" y1="119" x2="1422.2" y2="125" stroke="#8e8e86" stroke-width="0.9"/><line x1="1423.9" y1="119" x2="1423.9" y2="125" stroke="#8e8e86" stroke-width="0.9"/><line x1="1425.6" y1="119" x2="1425.6" y2="125" stroke="#8e8e86" stroke-width="0.9"/><line x1="1427.3" y1="119" x2="1427.3" y2="125" stroke="#8e8e86" stroke-width="0.9"/><line x1="1429.0" y1="119" x2="1429.0" y2="125" stroke="#8e8e86" stroke-width="0.9"/><rect x="1412.5" y="129.5" width="25" height="25.0" rx="2" fill="url(#gBtn)" stroke="#9c9894"/><path d="M1418.5,134.9 L1421.1,137.5 L1418.5,140.1 L1415.9,137.5 Z" fill="#c8c8ff" stroke="#2020ff" stroke-width="1"/><path d="M1420,139 L1427.5,146" stroke="#111" stroke-width="1.2"/><path d="M1429,147.5 L1424.5,146 L1427.5,143 Z" fill="#111"/><path d="M1430,145.9 L1432.6,148.5 L1430,151.1 L1427.4,148.5 Z" fill="#c8c8ff" stroke="#209020" stroke-width="1"/><line x1="1417" y1="159.5" x2="1433" y2="159.5" stroke="#b4b4ac"/><line x1="1417" y1="160.5" x2="1433" y2="160.5" stroke="#fafaf8"/><line x1="1417" y1="299.5" x2="1433" y2="299.5" stroke="#b4b4ac"/><line x1="1417" y1="300.5" x2="1433" y2="300.5" stroke="#fafaf8"/><line x1="1417" y1="517.5" x2="1433" y2="517.5" stroke="#b4b4ac"/><line x1="1417" y1="518.5" x2="1433" y2="518.5" stroke="#fafaf8"/><path d="M1420,172 L1433,172 M1419,174 L1419,185" stroke="#555" stroke-width="1.1" stroke-dasharray="1.3,0.9"/><path d="M1418.5,169.2 L1421.3,172 L1418.5,174.8 L1415.7,172 Z" fill="#8080ff" stroke="#2020ff" stroke-width="1"/><path d="M1431.5,195 L1431.5,210.5 L1417,210.5" stroke="#7aa07a" stroke-width="1" fill="none" stroke-dasharray="1.3,0.9"/><path d="M1431.5,221 L1431.5,236.5 L1417,236.5" stroke="#555" stroke-width="1" fill="none" stroke-dasharray="1.3,0.9"/><path d="M1431,233.4 L1433.6,236 L1431,238.6 L1428.4,236 Z" fill="#8ab08a" stroke="#3a6a3a" stroke-width="1"/><path d="M1430.5,253 L1430.5,261.5 L1416,261.5" stroke="#555" stroke-width="1" fill="none" stroke-dasharray="1.3,0.9"/><path d="M1429.5,248.9 L1432.1,251.5 L1429.5,254.1 L1426.9,251.5 Z" fill="#8ab08a" stroke="#3a6a3a" stroke-width="1"/><path d="M1430.5,273 L1430.5,288.5 L1416,288.5" stroke="#555" stroke-width="1" fill="none" stroke-dasharray="1.3,0.9"/><circle cx="1420" cy="278" r="1.8" fill="#8ab08a" stroke="#3a6a3a" stroke-width="0.9"/><rect x="1412.5" y="305.5" width="25" height="25.0" rx="2" fill="url(#gBtn)" stroke="#9c9894"/><path d="M1417,321 Q1418,313 1425,314 Q1426,323 1433,327" stroke="#777" stroke-width="1.2" fill="none"/><path d="M1425,310.7 L1427.8,313.5 L1425,316.3 L1422.2,313.5 Z" fill="#9c9cff" stroke="#2020ff" stroke-width="1"/><path d="M1416,337 Q1426,338 1432,346 Q1432,350 1424,351" stroke="#2a9a2a" stroke-width="1.6" fill="none"/><path d="M1417,378 L1433,362" stroke="#333" stroke-width="1"/><path d="M1417,370 L1433,369" stroke="#555" stroke-width="1" stroke-dasharray="1,1"/><path d="M1425,367.0 L1427.5,369.5 L1425,372.0 L1422.5,369.5 Z" fill="#8ab08a" stroke="#3a6a3a" stroke-width="1"/><path d="M1416,388 Q1430,389 1433,397 Q1430,403 1424,402" stroke="#777" stroke-width="1.1" fill="none"/><path d="M1424,399.4 L1426.6,402 L1424,404.6 L1421.4,402 Z" fill="#9c9cff" stroke="#2a8a2a" stroke-width="1"/><path d="M1417,414 Q1425,414 1426,419 Q1425,423 1434,423" stroke="#777" stroke-width="1.1" fill="none"/><rect x="1422" y="415" width="4" height="4" fill="#8080d0" stroke="#2a8a2a" stroke-width="1"/><path d="M1417,456 L1432,440" stroke="#d03030" stroke-width="1.2"/><path d="M1418,451 L1421,455 M1421,448 L1424,452 M1426,443 L1429,447 M1429,440 L1432,444" stroke="#d03030" stroke-width="1.1"/><circle cx="1425" cy="448" r="1.8" fill="#8080d0" stroke="#2a8a2a" stroke-width="1"/><path d="M1430.5,465 L1430.5,479.5 L1416,479.5" stroke="#333" stroke-width="1.1" fill="none"/><circle cx="1422" cy="471" r="1.6" fill="#fff" stroke="#2a8a2a" stroke-width="1.1"/><path d="M1419,497 L1425,497 M1422,494 L1422,500" stroke="#111" stroke-width="1.2"/><path d="M1430.5,491 L1430.5,505.5 L1417,505.5" stroke="#111" stroke-width="1.1" fill="none" stroke-dasharray="1.3,0.9"/><rect x="1406" y="457" width="1" height="1" fill="#999"/><rect x="1406" y="459" width="1" height="1" fill="#999"/><rect x="1406" y="461" width="1" height="1" fill="#999"/><rect x="1406" y="463" width="1" height="1" fill="#999"/><rect x="1406" y="465" width="1" height="1" fill="#999"/><rect x="1418.5" y="528.5" width="13" height="15.5" fill="url(#gPage)" stroke="#222" stroke-width="1.1"/><rect x="1412.5" y="549.5" width="25" height="25.0" rx="2" fill="url(#gBtn)" stroke="#9c9894"/><g stroke="#2020f0" stroke-width="1.1"><line x1="1417.0" y1="554" x2="1417.0" y2="570" /><line x1="1416" y1="555.0" x2="1433" y2="555.0" /><line x1="1420.8" y1="554" x2="1420.8" y2="570" /><line x1="1416" y1="558.7" x2="1433" y2="558.7" /><line x1="1424.6" y1="554" x2="1424.6" y2="570" /><line x1="1416" y1="562.4" x2="1433" y2="562.4" /><line x1="1428.4" y1="554" x2="1428.4" y2="570" /><line x1="1416" y1="566.1" x2="1433" y2="566.1" /><line x1="1432.2" y1="554" x2="1432.2" y2="570" /><line x1="1416" y1="569.8" x2="1433" y2="569.8" /></g><rect x="1412.5" y="575.5" width="25" height="25.0" rx="2" fill="url(#gBtn)" stroke="#9c9894"/><path d="M1418.5,580 L1418.5,596 M1431.5,580 L1431.5,596 M1422.5,596 L1428,580" stroke="#2020f0" stroke-width="1.4"/></svg>
<div class="r" style="left:1436px;top:99px;width:4px;height:1px;background:#8a8a84"></div>
<svg class="r" style="left:0;top:0" width="1440" height="869"><rect x="622.5" y="64.5" width="9" height="7" fill="#f6d24a" stroke="#9a8230"/><circle cx="630" cy="63" r="4" fill="url(#gLens)" stroke="#555" stroke-width="0.9"/><rect x="618" y="60" width="2" height="2" fill="#111"/><rect x="633.5" y="57.5" width="2" height="2" fill="#111"/><rect x="618" y="72" width="2" height="2" fill="#111"/><rect x="631" y="72" width="2" height="2" fill="#111"/><rect x="633.5" y="67" width="2" height="2" fill="#111"/><line x1="646.5" y1="57" x2="646.5" y2="76" stroke="#b4b4ac"/><line x1="806.5" y1="57" x2="806.5" y2="76" stroke="#b4b4ac"/><path d="M659.5,58.5 L675,58.5 L675,73.5 L659.5,73.5 Z" fill="url(#gBW)" stroke="#000" stroke-width="1.2"/><path d="M661,73 L672,62 L675,61 L674,64 L663,74 Z" fill="#444" stroke="#111" stroke-width="0.7"/><path d="M672,62 L675,59 L675,64 Z" fill="#f8b000"/><text x="688.5" y="73.8" font-family="Liberation Serif" font-weight="700" font-size="22" fill="#000" textLength="17" lengthAdjust="spacingAndGlyphs">T</text><path d="M719.5,62 L730,62 L735,65 L724,65 Z" fill="#fff" stroke="#222" stroke-width="0.9"/><path d="M719.5,65.2 L730,65.2 L735,68.2 L724,68.2 Z" fill="#fff" stroke="#222" stroke-width="0.9"/><path d="M719.5,68.4 L730,68.4 L735,71.4 L724,71.4 Z" fill="#fff" stroke="#222" stroke-width="0.9"/><rect x="749.5" y="58.5" width="15" height="15" fill="#eeeeea" stroke="#000" stroke-width="1.2"/><rect x="750.5" y="59.5" width="13" height="2.5" fill="#9cc0ea"/><line x1="749.5" y1="62.5" x2="764.5" y2="62.5" stroke="#000"/><path d="M755,65 L752.5,67.5 L755,70 M759,65 L761.5,67.5 L759,70" stroke="#333" stroke-width="1.1" fill="none"/><line x1="779.5" y1="58" x2="779.5" y2="74" stroke="#d01010" stroke-width="1.2"/><rect x="781.5" y="58.5" width="6" height="4" rx="1" fill="#a8c8ec" stroke="#111"/><rect x="781.5" y="64.5" width="13" height="3.5" rx="1" fill="#a8c8ec" stroke="#111"/><rect x="781.5" y="69.5" width="10" height="4" rx="1" fill="#a8c8ec" stroke="#111"/><rect x="816.5" y="58.5" width="21" height="16" rx="1.5" fill="#f4f4f2" stroke="#8a8a8a"/><rect x="818" y="60" width="18" height="13" fill="#e2e2e0"/><rect x="820" y="65" width="6" height="3.5" fill="#fff" stroke="#555" stroke-width="0.8"/><rect x="820" y="68.5" width="6" height="3.5" fill="#52606a"/><rect x="828.5" y="64" width="6" height="3.5" fill="#52606a"/><rect x="828.5" y="67.5" width="6" height="4" fill="#fff" stroke="#555" stroke-width="0.8"/><rect x="848.5" y="56.5" width="17" height="19" rx="1" fill="#f6f6f4" stroke="#7a7a7a"/><line x1="851" y1="59.5" x2="863" y2="59.5" stroke="#aaa" stroke-width="0.8"/><line x1="851" y1="62.0" x2="863" y2="62.0" stroke="#aaa" stroke-width="0.8"/><line x1="851" y1="64.5" x2="863" y2="64.5" stroke="#aaa" stroke-width="0.8"/><line x1="851" y1="67.0" x2="863" y2="67.0" stroke="#aaa" stroke-width="0.8"/><line x1="851" y1="69.5" x2="863" y2="69.5" stroke="#aaa" stroke-width="0.8"/><line x1="851" y1="72.0" x2="863" y2="72.0" stroke="#aaa" stroke-width="0.8"/><path d="M855,64 L858,64 L859,66 L863,70 L862,72 L858,68 L856,67 Z" fill="#444" stroke="#333" stroke-width="0.8"/><path d="M616,88.5 L630.5,88.5 Q631.5,88.5 631.5,89.5 L631.5,110 Q631.5,111 630.5,111 L616,111" fill="#f4f4f2" stroke="#b0ada8"/><path d="M623.5,95 L627.5,95 L625.5,92.5 Z" fill="#111"/><path d="M623.5,105 L627.5,105 L625.5,107.5 Z" fill="#111"/><path d="M643.5,100 L643.5,97 Q643.5,94.5 646.5,94.5 Q649.5,94.5 649.5,97" fill="none" stroke="#666" stroke-width="1.1"/><rect x="642" y="99.5" width="9.5" height="7" rx="0.5" fill="#f0dc7a" stroke="#7a6e3a" stroke-width="0.9"/><circle cx="646.7" cy="103" r="0.9" fill="#7a6e3a"/><rect x="683.5" y="88.5" width="62" height="22" rx="2" fill="#fff" stroke="#b5b2ad"/><rect x="734.5" y="89.5" width="10" height="20" fill="#fafafa"/><path d="M738.5,96 L743.5,96 L741,92.5 Z" fill="#111"/><path d="M738.5,103 L743.5,103 L741,106.5 Z" fill="#111"/><rect x="748.5" y="88.5" width="47" height="22" rx="2" fill="url(#gBtnH)" stroke="#aaa7a2"/><line x1="776.5" y1="91" x2="776.5" y2="108" stroke="#b9b6b0"/><path d="M781,96.5 L790,96.5 L785.5,101.5 Z" fill="#111"/><line x1="800.5" y1="90" x2="800.5" y2="110" stroke="#c4c4bc"/><rect x="869.5" y="85.5" width="29" height="29" rx="2" fill="url(#gBtn)" stroke="#9c9894"/><rect x="899.5" y="85.5" width="29" height="29" rx="2" fill="url(#gBtn)" stroke="#9c9894"/><rect x="929.5" y="85.5" width="29" height="29" rx="2" fill="url(#gBtn)" stroke="#9c9894"/><rect x="959.5" y="85.5" width="29" height="29" rx="2" fill="url(#gBtn)" stroke="#9c9894"/><path d="M878,96.5 L890,96.5 L890,101 M878,99.5 L887,99.5 L887,101" stroke="#111" stroke-width="1.6" fill="none"/><path d="M908,96 L914,96 Q919,96 919,101 M908,99 L913,99 Q916,99 916,101" stroke="#333" stroke-width="1.1" fill="none"/><path d="M938,96.5 L950,96.5 L950,101 M938,99.5 L947,99.5 L947,101" stroke="#3a6ea8" stroke-width="1.8" fill="none"/><path d="M968,96.5 L980,96.5" stroke="#111" stroke-width="1.8"/><path d="M969,98 L970.5,101 L972,98 M973,98 L974.5,101 L976,98 M977,98 L978.5,101 L980,98" fill="#111" stroke="#111" stroke-width="0.7"/><path d="M879.5,105.5 L880.5,105.5 M881.5,105.5 L882.5,105.5 M883.5,105.5 L885.5,105.5" stroke="#111" stroke-width="1"/><path d="M885.5,103 L889.0,105.5 L885.5,108 Z" fill="#111"/><path d="M909.5,105.5 L910.5,105.5 M911.5,105.5 L912.5,105.5 M913.5,105.5 L915.5,105.5" stroke="#111" stroke-width="1"/><path d="M915.5,103 L919.0,105.5 L915.5,108 Z" fill="#111"/><path d="M939.5,105.5 L940.5,105.5 M941.5,105.5 L942.5,105.5 M943.5,105.5 L945.5,105.5" stroke="#111" stroke-width="1"/><path d="M945.5,103 L949.0,105.5 L945.5,108 Z" fill="#111"/><path d="M969.5,105.5 L970.5,105.5 M971.5,105.5 L972.5,105.5 M973.5,105.5 L975.5,105.5" stroke="#111" stroke-width="1"/><path d="M975.5,103 L979.0,105.5 L975.5,108 Z" fill="#111"/></svg>
<div class="t" style="left:671.50px;top:93.00px;font-size:13px;font-weight:400;letter-spacing:0.000px;color:#333;font-family:'Liberation Sans', sans-serif;">T</div>
<div class="t" style="left:688.70px;top:92.87px;font-size:13.5px;font-weight:400;letter-spacing:-0.633px;color:#1c1c1c;font-family:'Liberation Sans', sans-serif;clip-path:inset(-5px 1px -5px -5px)">203,345</div>
<div class="t" style="left:752.50px;top:92.77px;font-size:13.5px;font-weight:400;letter-spacing:0.242px;color:#1c1c1c;font-family:'Liberation Sans', sans-serif;">px</div>
<div class="t" style="left:815.40px;top:92.37px;font-size:13.5px;font-weight:400;letter-spacing:-0.417px;color:#1c1c1c;font-family:'Liberation Sans', sans-serif;">Afectar:</div>
<div class="r" style="left:254px;top:47px;width:365px;height:458px;background:#f8f8f5;border:1px solid #bdbda6"></div>
<div class="r" style="left:256px;top:141px;width:361px;height:21px;background:#cde0f7;border:1px solid #5e9ce6"></div>
<div class="t" style="left:281.50px;top:52.57px;font-size:13.5px;font-weight:400;letter-spacing:0.581px;color:#1c1c1c;font-family:'Liberation Sans', sans-serif;"><u>O</u>bjeto a trayecto</div>
<div class="t" style="left:517.30px;top:52.57px;font-size:13.5px;font-weight:400;letter-spacing:0.802px;color:#1c1c1c;font-family:'Liberation Sans', sans-serif;">Mayús+Ctrl+C</div>
<div class="t" style="left:281.50px;top:73.57px;font-size:13.5px;font-weight:400;letter-spacing:0.536px;color:#1c1c1c;font-family:'Liberation Sans', sans-serif;"><u>B</u>orde a trayecto</div>
<div class="t" style="left:541.30px;top:73.57px;font-size:13.5px;font-weight:400;letter-spacing:0.981px;color:#1c1c1c;font-family:'Liberation Sans', sans-serif;">Ctrl+Alt+C</div>
<div class="t" style="left:281.50px;top:94.57px;font-size:13.5px;font-weight:400;letter-spacing:0.495px;color:#1c1c1c;font-family:'Liberation Sans', sans-serif;">Vec<u>t</u>orizar mapa de bits...</div>
<div class="t" style="left:522.30px;top:94.57px;font-size:13.5px;font-weight:400;letter-spacing:0.981px;color:#1c1c1c;font-family:'Liberation Sans', sans-serif;">Mayús+Alt+B</div>
<div class="t" style="left:281.50px;top:123.57px;font-size:13.5px;font-weight:400;letter-spacing:0.431px;color:#1c1c1c;font-family:'Liberation Sans', sans-serif;"><u>U</u>nión</div>
<div class="t" style="left:568.40px;top:123.57px;font-size:13.5px;font-weight:400;letter-spacing:1.447px;color:#1c1c1c;font-family:'Liberation Sans', sans-serif;">Ctrl++</div>
<div class="t" style="left:281.50px;top:144.57px;font-size:13.5px;font-weight:400;letter-spacing:0.525px;color:#1c1c1c;font-family:'Liberation Sans', sans-serif;"><u>D</u>iferencia</div>
<div class="t" style="left:574.40px;top:144.57px;font-size:13.5px;font-weight:400;letter-spacing:0.925px;color:#1c1c1c;font-family:'Liberation Sans', sans-serif;">Ctrl+-</div>
<div class="t" style="left:281.50px;top:165.57px;font-size:13.5px;font-weight:400;letter-spacing:0.474px;color:#1c1c1c;font-family:'Liberation Sans', sans-serif;"><u>I</u>ntersección</div>
<div class="t" style="left:572.40px;top:165.57px;font-size:13.5px;font-weight:400;letter-spacing:1.173px;color:#1c1c1c;font-family:'Liberation Sans', sans-serif;">Ctrl+*</div>
<div class="t" style="left:281.50px;top:186.57px;font-size:13.5px;font-weight:400;letter-spacing:0.403px;color:#1c1c1c;font-family:'Liberation Sans', sans-serif;">E<u>x</u>clusión</div>
<div class="t" style="left:568.40px;top:186.57px;font-size:13.5px;font-weight:400;letter-spacing:1.757px;color:#1c1c1c;font-family:'Liberation Sans', sans-serif;">Ctrl+^</div>
<div class="t" style="left:281.50px;top:207.57px;font-size:13.5px;font-weight:400;letter-spacing:0.676px;color:#1c1c1c;font-family:'Liberation Sans', sans-serif;">Di<u>v</u>isión</div>
<div class="t" style="left:575.40px;top:207.57px;font-size:13.5px;font-weight:400;letter-spacing:0.874px;color:#1c1c1c;font-family:'Liberation Sans', sans-serif;">Ctrl+/</div>
<div class="t" style="left:281.50px;top:228.57px;font-size:13.5px;font-weight:400;letter-spacing:0.558px;color:#1c1c1c;font-family:'Liberation Sans', sans-serif;">Cor<u>t</u>ar trayecto</div>
<div class="t" style="left:546.30px;top:228.57px;font-size:13.5px;font-weight:400;letter-spacing:1.092px;color:#1c1c1c;font-family:'Liberation Sans', sans-serif;">Ctrl+Alt+/</div>
<div class="t" style="left:281.50px;top:257.57px;font-size:13.5px;font-weight:400;letter-spacing:0.639px;color:#1c1c1c;font-family:'Liberation Sans', sans-serif;"><u>C</u>ombinar</div>
<div class="t" style="left:570.40px;top:257.57px;font-size:13.5px;font-weight:400;letter-spacing:0.823px;color:#1c1c1c;font-family:'Liberation Sans', sans-serif;">Ctrl+K</div>
<div class="t" style="left:281.50px;top:278.57px;font-size:13.5px;font-weight:400;letter-spacing:0.597px;color:#1c1c1c;font-family:'Liberation Sans', sans-serif;">Descombi<u>n</u>ar</div>
<div class="t" style="left:517.30px;top:278.57px;font-size:13.5px;font-weight:400;letter-spacing:0.870px;color:#1c1c1c;font-family:'Liberation Sans', sans-serif;">Mayús+Ctrl+K</div>
<div class="t" style="left:281.50px;top:307.57px;font-size:13.5px;font-weight:400;letter-spacing:0.163px;color:#1c1c1c;font-family:'Liberation Sans', sans-serif;">Re<u>d</u>ucir</div>
<div class="t" style="left:574.40px;top:307.57px;font-size:13.5px;font-weight:400;letter-spacing:0.925px;color:#1c1c1c;font-family:'Liberation Sans', sans-serif;">Ctrl+(</div>
<div class="t" style="left:281.50px;top:328.57px;font-size:13.5px;font-weight:400;letter-spacing:0.790px;color:#1c1c1c;font-family:'Liberation Sans', sans-serif;">A<u>m</u>pliar</div>
<div class="t" style="left:574.40px;top:328.57px;font-size:13.5px;font-weight:400;letter-spacing:0.925px;color:#1c1c1c;font-family:'Liberation Sans', sans-serif;">Ctrl+)</div>
<div class="t" style="left:281.50px;top:349.57px;font-size:13.5px;font-weight:400;letter-spacing:0.593px;color:#1c1c1c;font-family:'Liberation Sans', sans-serif;">Desvío d<u>i</u>námico</div>
<div class="t" style="left:575.40px;top:349.57px;font-size:13.5px;font-weight:400;letter-spacing:0.274px;color:#1c1c1c;font-family:'Liberation Sans', sans-serif;">Ctrl+J</div>
<div class="t" style="left:281.50px;top:370.57px;font-size:13.5px;font-weight:400;letter-spacing:0.467px;color:#1c1c1c;font-family:'Liberation Sans', sans-serif;">Desvío en<u>l</u>azado</div>
<div class="t" style="left:546.30px;top:370.57px;font-size:13.5px;font-weight:400;letter-spacing:0.759px;color:#1c1c1c;font-family:'Liberation Sans', sans-serif;">Ctrl+Alt+J</div>
<div class="t" style="left:281.50px;top:399.57px;font-size:13.5px;font-weight:400;letter-spacing:0.624px;color:#1c1c1c;font-family:'Liberation Sans', sans-serif;">Si<u>m</u>plificar</div>
<div class="t" style="left:572.40px;top:399.57px;font-size:13.5px;font-weight:400;letter-spacing:0.722px;color:#1c1c1c;font-family:'Liberation Sans', sans-serif;">Ctrl+L</div>
<div class="t" style="left:281.50px;top:420.57px;font-size:13.5px;font-weight:400;letter-spacing:0.463px;color:#1c1c1c;font-family:'Liberation Sans', sans-serif;"><u>R</u>evertir</div>
<div class="t" style="left:281.50px;top:448.57px;font-size:13.5px;font-weight:400;letter-spacing:0.519px;color:#1c1c1c;font-family:'Liberation Sans', sans-serif;">Editor de efectos de trayecto...</div>
<div class="t" style="left:518.00px;top:448.57px;font-size:13.5px;font-weight:400;letter-spacing:0.942px;color:#1c1c1c;font-family:'Liberation Sans', sans-serif;">Mayús+Ctrl+7</div>
<div class="t" style="left:281.50px;top:467.57px;font-size:13.5px;font-weight:400;letter-spacing:0.522px;color:#1c1c1c;font-family:'Liberation Sans', sans-serif;">Pegar <u>e</u>fecto de trayecto</div>
<div class="t" style="left:571.30px;top:467.57px;font-size:13.5px;font-weight:400;letter-spacing:0.942px;color:#1c1c1c;font-family:'Liberation Sans', sans-serif;">Ctrl+7</div>
<div class="t" style="left:281.50px;top:486.57px;font-size:13.5px;font-weight:400;letter-spacing:0.630px;color:#1c1c1c;font-family:'Liberation Sans', sans-serif;">Eliminar <u>e</u>fecto de trayecto</div>
<div class="r" style="left:260px;top:115px;width:354px;height:1px;background:#c9c9b8"></div>
<div class="r" style="left:260px;top:116px;width:354px;height:1px;background:#ffffff"></div>
<div class="r" style="left:260px;top:249px;width:354px;height:1px;background:#c9c9b8"></div>
<div class="r" style="left:260px;top:250px;width:354px;height:1px;background:#ffffff"></div>
<div class="r" style="left:260px;top:299px;width:354px;height:1px;background:#c9c9b8"></div>
<div class="r" style="left:260px;top:300px;width:354px;height:1px;background:#ffffff"></div>
<div class="r" style="left:260px;top:391px;width:354px;height:1px;background:#c9c9b8"></div>
<div class="r" style="left:260px;top:392px;width:354px;height:1px;background:#ffffff"></div>
<div class="r" style="left:260px;top:441px;width:354px;height:1px;background:#c9c9b8"></div>
<div class="r" style="left:260px;top:442px;width:354px;height:1px;background:#ffffff"></div>
<div class="r" style="left:1386px;top:139px;width:15px;height:650px;background:linear-gradient(90deg,#d2d2d0,#efefed 45%,#f5f5f3 70%,#e2e2e0)"></div>
<div class="r" style="left:1386px;top:139px;width:15px;height:15px;border:1px solid #a19e99;border-radius:1px;background:linear-gradient(#f4f4f2,#d9d9d7)"></div><svg class="r" style="left:0;top:0" width="1440" height="869"><path d="M1389.0,149.0 L1398.0,149.0 L1393.5,144.0 Z" fill="#111"/></svg>
<div class="r" style="left:1386px;top:774px;width:15px;height:15px;border:1px solid #a19e99;border-radius:1px;background:linear-gradient(#f4f4f2,#d9d9d7)"></div><svg class="r" style="left:0;top:0" width="1440" height="869"><path d="M1389.0,779.0 L1398.0,779.0 L1393.5,784.0 Z" fill="#111"/></svg>
<div class="r" style="left:1386px;top:460px;width:15px;height:63px;border:1px solid #a19e99;border-radius:1px;background:linear-gradient(90deg,#ebebe9,#d3d3d1)"></div>
<svg class="r" style="left:0;top:0" width="1440" height="869"><g stroke="#6e6e6e" stroke-width="1"><line x1="1390" y1="487.5" x2="1397" y2="487.5"/><line x1="1390" y1="489.5" x2="1397" y2="489.5"/><line x1="1390" y1="491.5" x2="1397" y2="491.5"/><line x1="1390" y1="493.5" x2="1397" y2="493.5"/><line x1="1390" y1="495.5" x2="1397" y2="495.5"/></g></svg>
<div class="r" style="left:1386px;top:120px;width:16px;height:16px;border:1px solid #a19e99;border-radius:3px;background:linear-gradient(#fbfbfa,#e3e3e1)"></div>
<svg class="r" style="left:0;top:0" width="1440" height="869"><path d="M1391.5,125 L1394.5,123 L1396.5,123 L1396.5,132 L1393.5,132 L1393.5,127 L1391.5,128 Z" fill="#fff" stroke="#777" stroke-width="0.8"/></svg>
<div class="r" style="left:51px;top:790px;width:1332px;height:15px;background:linear-gradient(#d2d2d0,#e6e6e4 40%,#f4f4f2 85%,#ececea)"></div>
<div class="r" style="left:51px;top:790px;width:15px;height:15px;border:1px solid #a19e99;border-radius:1px;background:linear-gradient(#f4f4f2,#d9d9d7)"></div><svg class="r" style="left:0;top:0" width="1440" height="869"><path d="M61.0,793.0 L61.0,802.0 L56.0,797.5 Z" fill="#111"/></svg>
<div class="r" style="left:1368px;top:790px;width:15px;height:15px;border:1px solid #a19e99;border-radius:1px;background:linear-gradient(#f4f4f2,#d9d9d7)"></div><svg class="r" style="left:0;top:0" width="1440" height="869"><path d="M1373.0,793.0 L1373.0,802.0 L1378.0,797.5 Z" fill="#111"/></svg>
<div class="r" style="left:905px;top:790px;width:207px;height:15px;border:1px solid #a19e99;border-radius:1px;background:linear-gradient(#efefed,#d0d0ce)"></div>
<svg class="r" style="left:0;top:0" width="1440" height="869"><g stroke="#6e6e6e" stroke-width="1"><line x1="1003.5" y1="794" x2="1003.5" y2="801"/><line x1="1005.5" y1="794" x2="1005.5" y2="801"/><line x1="1007.5" y1="794" x2="1007.5" y2="801"/><line x1="1009.5" y1="794" x2="1009.5" y2="801"/><line x1="1011.5" y1="794" x2="1011.5" y2="801"/><line x1="1013.5" y1="794" x2="1013.5" y2="801"/></g></svg>
<svg class="r" style="left:0;top:0" width="1440" height="869"><defs><pattern id="chkC" x="0" y="0" width="2" height="2" patternUnits="userSpaceOnUse"><rect width="1" height="1" fill="#000"/><rect x="1" y="1" width="1" height="1" fill="#000"/></pattern><linearGradient id="cmg" x1="0" y1="0" x2="1" y2="1"><stop offset="0" stop-color="#20a040"/><stop offset="0.55" stop-color="#3050c0"/><stop offset="1" stop-color="#c02050"/></linearGradient><mask id="cmm"><rect x="1380" y="785" width="30" height="25" fill="url(#chkW)"/></mask><pattern id="chkW" x="0" y="0" width="2" height="2" patternUnits="userSpaceOnUse"><rect width="1" height="1" fill="#fff"/><rect x="1" y="1" width="1" height="1" fill="#fff"/></pattern></defs><path d="M1389,792 L1399,799 L1391,803.5 Z" fill="url(#cmg)" mask="url(#cmm)"/></svg>
<div class="r" style="left:0px;top:805px;width:1440px;height:1px;background:#f6f6f4"></div>
<div class="r" style="left:0px;top:806px;width:1429px;height:1px;background:#b8b8b0"></div>
<div class="r" style="left:0px;top:807px;width:1429px;height:20px;background:#f7f7f5"></div>
<svg class="r" style="left:0;top:0" width="1440" height="869"><rect x="2" y="809" width="16" height="16" fill="#fff"/><path d="M2.5,809.5 L17.5,824.5 M17.5,809.5 L2.5,824.5" stroke="#860f0f" stroke-width="1.4"/><rect x="18" y="809" width="16" height="16" fill="#000000"/><rect x="34" y="809" width="16" height="16" fill="#1a1a1a"/><rect x="50" y="809" width="16" height="16" fill="#333333"/><rect x="66" y="809" width="16" height="16" fill="#4d4d4d"/><rect x="82" y="809" width="16" height="16" fill="#666666"/><rect x="98" y="809" width="16" height="16" fill="#808080"/><rect x="114" y="809" width="16" height="16" fill="#999999"/><rect x="130" y="809" width="16" height="16" fill="#b3b3b3"/><rect x="146" y="809" width="16" height="16" fill="#cccccc"/><rect x="162" y="809" width="16" height="16" fill="#e6e6e6"/><rect x="178" y="809" width="16" height="16" fill="#ececec"/><rect x="194" y="809" width="16" height="16" fill="#f2f2f2"/><rect x="210" y="809" width="16" height="16" fill="#f9f9f9"/><rect x="226" y="809" width="16" height="16" fill="#ffffff"/><rect x="242" y="809" width="16" height="16" fill="#800000"/><rect x="258" y="809" width="16" height="16" fill="#ff0000"/><rect x="274" y="809" width="16" height="16" fill="#808000"/><rect x="290" y="809" width="16" height="16" fill="#ffff00"/><rect x="306" y="809" width="16" height="16" fill="#008000"/><rect x="322" y="809" width="16" height="16" fill="#00ff00"/><rect x="338" y="809" width="16" height="16" fill="#008080"/><rect x="354" y="809" width="16" height="16" fill="#00ffff"/><rect x="370" y="809" width="16" height="16" fill="#000080"/><rect x="386" y="809" width="16" height="16" fill="#0000ff"/><rect x="402" y="809" width="16" height="16" fill="#800080"/><rect x="418" y="809" width="16" height="16" fill="#ff00ff"/><rect x="434" y="809" width="16" height="16" fill="#2b0000"/><rect x="450" y="809" width="16" height="16" fill="#550000"/><rect x="466" y="809" width="16" height="16" fill="#800000"/><rect x="482" y="809" width="16" height="16" fill="#aa0000"/><rect x="498" y="809" width="16" height="16" fill="#d40000"/><rect x="514" y="809" width="16" height="16" fill="#ff0000"/><rect x="530" y="809" width="16" height="16" fill="#ff2a2a"/><rect x="546" y="809" width="16" height="16" fill="#ff5555"/><rect x="562" y="809" width="16" height="16" fill="#ff8080"/><rect x="578" y="809" width="16" height="16" fill="#ffaaaa"/><rect x="594" y="809" width="16" height="16" fill="#ffd5d5"/><rect x="610" y="809" width="16" height="16" fill="#280b0b"/><rect x="626" y="809" width="16" height="16" fill="#501616"/><rect x="642" y="809" width="16" height="16" fill="#782121"/><rect x="658" y="809" width="16" height="16" fill="#a02c2c"/><rect x="674" y="809" width="16" height="16" fill="#c83737"/><rect x="690" y="809" width="16" height="16" fill="#d35f5f"/><rect x="706" y="809" width="16" height="16" fill="#de8787"/><rect x="722" y="809" width="16" height="16" fill="#e9afaf"/><rect x="738" y="809" width="16" height="16" fill="#f4d7d7"/><rect x="754" y="809" width="16" height="16" fill="#241c1c"/><rect x="770" y="809" width="16" height="16" fill="#483737"/><rect x="786" y="809" width="16" height="16" fill="#6c5353"/><rect x="802" y="809" width="16" height="16" fill="#916f6f"/><rect x="818" y="809" width="16" height="16" fill="#ac9393"/><rect x="834" y="809" width="16" height="16" fill="#c8b7b7"/><rect x="850" y="809" width="16" height="16" fill="#e3dbdb"/><rect x="866" y="809" width="16" height="16" fill="#2b1100"/><rect x="882" y="809" width="16" height="16" fill="#552200"/><rect x="898" y="809" width="16" height="16" fill="#803300"/><rect x="914" y="809" width="16" height="16" fill="#aa4400"/><rect x="930" y="809" width="16" height="16" fill="#d45500"/><rect x="946" y="809" width="16" height="16" fill="#ff6600"/><rect x="962" y="809" width="16" height="16" fill="#ff7f2a"/><rect x="978" y="809" width="16" height="16" fill="#ff9955"/><rect x="994" y="809" width="16" height="16" fill="#ffb380"/><rect x="1010" y="809" width="16" height="16" fill="#ffccaa"/><rect x="1026" y="809" width="16" height="16" fill="#ffe6d5"/><rect x="1042" y="809" width="16" height="16" fill="#28170b"/><rect x="1058" y="809" width="16" height="16" fill="#502d16"/><rect x="1074" y="809" width="16" height="16" fill="#784421"/><rect x="1090" y="809" width="16" height="16" fill="#a05a2c"/><rect x="1106" y="809" width="16" height="16" fill="#c87137"/><rect x="1122" y="809" width="16" height="16" fill="#d38d5f"/><rect x="1138" y="809" width="16" height="16" fill="#deaa87"/><rect x="1154" y="809" width="16" height="16" fill="#e9c6af"/><rect x="1170" y="809" width="16" height="16" fill="#f4e3d7"/><rect x="1186" y="809" width="16" height="16" fill="#241f1c"/><rect x="1202" y="809" width="16" height="16" fill="#483e37"/><rect x="1218" y="809" width="16" height="16" fill="#6c5d53"/><rect x="1234" y="809" width="16" height="16" fill="#917c6f"/><rect x="1250" y="809" width="16" height="16" fill="#ac9d93"/><rect x="1266" y="809" width="16" height="16" fill="#c8beb7"/><rect x="1282" y="809" width="16" height="16" fill="#e3dedb"/><rect x="1298" y="809" width="16" height="16" fill="#2b2200"/><rect x="1314" y="809" width="16" height="16" fill="#554400"/><rect x="1330" y="809" width="16" height="16" fill="#806600"/><rect x="1346" y="809" width="16" height="16" fill="#aa8800"/><rect x="1362" y="809" width="16" height="16" fill="#d4aa00"/><rect x="1378" y="809" width="16" height="16" fill="#ffcc00"/><rect x="1394" y="809" width="16" height="16" fill="#ffd42a"/><rect x="1410" y="809" width="16" height="16" fill="#ffdd55"/></svg>
<svg class="r" style="left:0;top:0" width="1440" height="869"><path d="M1435,809.5 L1435,816 L1431,812.75 Z" fill="#111"/></svg>
<div class="r" style="left:0px;top:827px;width:1429px;height:15px;background:linear-gradient(#d2d2d0,#e6e6e4 40%,#f4f4f2 85%,#ececea)"></div>
<div class="r" style="left:1px;top:827px;width:14px;height:15px;border:1px solid #c9c7c3;background:linear-gradient(#f6f6f4,#e6e6e4)"></div>
<svg class="r" style="left:0;top:0" width="1440" height="869"><path d="M10,830 L10,839 L5,834.5 Z" fill="#a0a0a0"/></svg>
<div class="r" style="left:15px;top:827px;width:288px;height:15px;border:1px solid #a19e99;border-radius:1px;background:linear-gradient(#efefed,#d0d0ce)"></div>
<svg class="r" style="left:0;top:0" width="1440" height="869"><g stroke="#6e6e6e" stroke-width="1"><line x1="154.5" y1="831" x2="154.5" y2="838"/><line x1="156.5" y1="831" x2="156.5" y2="838"/><line x1="158.5" y1="831" x2="158.5" y2="838"/><line x1="160.5" y1="831" x2="160.5" y2="838"/><line x1="162.5" y1="831" x2="162.5" y2="838"/><line x1="164.5" y1="831" x2="164.5" y2="838"/></g></svg>
<div class="r" style="left:1413px;top:827px;width:15px;height:15px;border:1px solid #a19e99;border-radius:1px;background:linear-gradient(#f4f4f2,#d9d9d7)"></div><svg class="r" style="left:0;top:0" width="1440" height="869"><path d="M1418.0,830.0 L1418.0,839.0 L1423.0,834.5 Z" fill="#111"/></svg>
<div class="r" style="left:0px;top:842px;width:1440px;height:1px;background:#d8d8d4"></div>
<div class="t" style="left:2.50px;top:843.87px;font-size:11.5px;font-weight:400;letter-spacing:0.329px;color:#1c1c1c;font-family:'Liberation Sans', sans-serif;">Relleno:</div>
<div class="t" style="left:2.50px;top:856.87px;font-size:11.5px;font-weight:400;letter-spacing:0.067px;color:#1c1c1c;font-family:'Liberation Sans', sans-serif;">Trazo:</div>
<div class="t" style="left:50.50px;top:843.02px;font-size:12.5px;font-weight:700;letter-spacing:0.000px;color:#111;font-family:'Liberation Sans', sans-serif;">m</div>
<div class="t" style="left:50.50px;top:856.02px;font-size:12.5px;font-weight:700;letter-spacing:0.000px;color:#111;font-family:'Liberation Sans', sans-serif;">m</div>
<div class="r" style="left:63px;top:843px;width:58px;height:12px;background:#ffffff"></div>
<div class="r" style="left:63px;top:856px;width:47px;height:13px;background:#000000"></div>
<div class="t" style="left:115.00px;top:856.87px;font-size:11.5px;font-weight:400;letter-spacing:0.000px;color:#1c1c1c;font-family:'Liberation Sans', sans-serif;">1</div>
<div class="t" style="left:125.30px;top:849.04px;font-size:12px;font-weight:400;letter-spacing:-0.768px;color:#1c1c1c;font-family:'Liberation Sans', sans-serif;">O:</div>
<div class="r" style="left:140px;top:844px;width:38px;height:23px;border:1px solid #b5b2ad;border-radius:2px;background:#fff"></div>
<div class="t" style="left:145.00px;top:849.34px;font-size:12px;font-weight:400;letter-spacing:0.000px;color:#1c1c1c;font-family:'Liberation Sans', sans-serif;">0</div>
<svg class="r" style="left:0;top:0" width="1440" height="869"><path d="M167.5,851 L173.5,851 L170.5,847.5 Z" fill="#9a9a9a"/><path d="M167.5,857.5 L173.5,857.5 L170.5,861 Z" fill="#111"/></svg>
<div class="r" style="left:180px;top:843px;width:1px;height:26px;background:#c4c4bc"></div>
<svg class="r" style="left:0;top:0" width="1440" height="869"><path d="M186,855 Q192,848 198,855 Q192,861 186,855 Z" fill="#fff" stroke="#111" stroke-width="1.3"/><circle cx="192" cy="855.5" r="2.3" fill="#111"/><path d="M187,850 L188,852 M190,849 L190.5,851 M194,849 L193.5,851 M197,850 L196,852" stroke="#111"/></svg>
<svg class="r" style="left:0;top:0" width="1440" height="869"><path d="M207,856 L207,852 Q207,849 210,849 Q213,849 213,852" fill="none" stroke="#555" stroke-width="1.2"/><rect x="205.5" y="855" width="9" height="7" fill="#e8d66a" stroke="#6b6b3a" stroke-width="1"/></svg>
<div class="r" style="left:219px;top:843px;width:86px;height:27px;border:1px solid #a9a6a1;border-radius:2px;background:linear-gradient(#f5f5f3,#e2e2e0)"></div>
<div class="t" style="left:226.00px;top:848.92px;font-size:12.5px;font-weight:700;letter-spacing:0.105px;color:#111;font-family:'Liberation Sans', sans-serif;">•Capa 1</div>
<div class="r" style="left:285px;top:846px;width:1px;height:21px;background:#b8b6b0"></div>
<svg class="r" style="left:0;top:0" width="1440" height="869"><path d="M288.5,853 L297.5,853 L293,858 Z" fill="#111"/></svg>
<div class="t" style="left:310.00px;top:848.57px;font-size:13.5px;font-weight:400;letter-spacing:0.544px;color:#1c1c1c;font-family:'Liberation Sans', sans-serif;">Crear la diferencia de los trayectos seleccionados (inferior menos superior)</div>
<div class="r" style="left:1274px;top:843px;width:1px;height:26px;background:#b8b8b0"></div>
<div class="t" style="left:1278.00px;top:843.69px;font-size:11px;font-weight:400;letter-spacing:1.607px;color:#1c1c1c;font-family:'Liberation Sans', sans-serif;">X:</div>
<div class="t" style="left:1278.00px;top:856.69px;font-size:11px;font-weight:400;letter-spacing:1.213px;color:#1c1c1c;font-family:'Liberation Sans', sans-serif;">Y:</div>
<div class="t" style="left:1299.30px;top:843.69px;font-size:11px;font-weight:400;letter-spacing:1.531px;color:#1c1c1c;font-family:'Liberation Sans', sans-serif;">162,13</div>
<div class="t" style="left:1299.30px;top:856.69px;font-size:11px;font-weight:400;letter-spacing:1.531px;color:#1c1c1c;font-family:'Liberation Sans', sans-serif;">543,97</div>
<div class="t" style="left:1350.00px;top:848.72px;font-size:12.5px;font-weight:400;letter-spacing:-0.108px;color:#1c1c1c;font-family:'Liberation Sans', sans-serif;">Z:</div>
<div class="r" style="left:1364px;top:844px;width:57px;height:23px;border:1px solid #b5b2ad;border-radius:2px;background:#fff"></div>
<div class="t" style="left:1373.50px;top:848.72px;font-size:12.5px;font-weight:400;letter-spacing:-0.490px;color:#1c1c1c;font-family:'Liberation Sans', sans-serif;">198%</div>
<svg class="r" style="left:0;top:0" width="1440" height="869"><path d="M1411.5,851 L1417.5,851 L1414.5,847.5 Z" fill="#111"/><path d="M1411.5,857.5 L1417.5,857.5 L1414.5,861 Z" fill="#111"/><g stroke="#a8a8a0" stroke-width="1"><line x1="1424" y1="869" x2="1439" y2="854"/><line x1="1428" y1="869" x2="1439" y2="858"/><line x1="1432" y1="869" x2="1439" y2="862"/></g></svg>
<svg class="r" style="left:0;top:0" width="1440" height="869"><path d="M267,51.5 Q261,51.5 260.8,56.5 Q260.8,59.5 263,59.5 M267,53 L267,63 Q267,66.5 271,66.5 L274,66.5 M263,59.5 L272,59.5 Q276,59.5 275.5,64" stroke="#6a6a6a" stroke-width="1" fill="none"/><rect x="265" y="51" width="4" height="4" fill="#0000ff"/><rect x="266.2" y="52.2" width="1.6" height="1.6" fill="#8080a0"/><rect x="261" y="57.5" width="4" height="4" fill="#0000ff"/><rect x="262.2" y="58.7" width="1.6" height="1.6" fill="#8080a0"/><rect x="272" y="63" width="4" height="4" fill="#0000ff"/><rect x="273.2" y="64.2" width="1.6" height="1.6" fill="#8080a0"/><path d="M261,86 L261,80 L268,73.5 L275.5,73.5 L275.5,78 L266,87 Z" fill="#b8d2ee"/><path d="M270,72.5 L274,72.5 M272,77.5 L276,77.5 M261,81 L261,86 M265,86 L265,88" stroke="#777" stroke-width="1"/><rect x="265" y="72" width="4" height="4" fill="#0000ff"/><rect x="266.2" y="73.2" width="1.6" height="1.6" fill="#8080a0"/><rect x="260" y="76.5" width="4" height="4" fill="#0000ff"/><rect x="261.2" y="77.7" width="1.6" height="1.6" fill="#8080a0"/><rect x="269.5" y="76" width="4" height="4" fill="#0000ff"/><rect x="270.7" y="77.2" width="1.6" height="1.6" fill="#8080a0"/><rect x="264.5" y="81" width="4" height="4" fill="#0000ff"/><rect x="265.7" y="82.2" width="1.6" height="1.6" fill="#8080a0"/><rect x="260.5" y="98.5" width="10" height="10" fill="#fff" stroke="#222"/><rect x="262.5" y="100.5" width="8" height="6" fill="none" stroke="#222" stroke-width="0.9"/><circle cx="269.5" cy="98.5" r="5.8" fill="#fff" stroke="#222" stroke-width="1"/><circle cx="269.5" cy="98.5" r="3.8" fill="#fff" stroke="#222" stroke-width="1"/><path d="M261,126 L266,126 Q266,122 270,122.5 Q275,123 275,128 Q275,133 269,133 L268,137 L261,137 Z" fill="#a8c4e0" stroke="#111" stroke-width="1.3"/><path d="M261,148 L265,148 Q266,154 271,155 L271,158 L261,158 Z" fill="#a8c4e0" stroke="#111" stroke-width="1.3"/><circle cx="270" cy="148" r="5.5" fill="none" stroke="#e02020" stroke-width="0.9" stroke-dasharray="1,1"/><rect x="260.5" y="169.5" width="10" height="10" fill="none" stroke="#e02020" stroke-width="0.9" stroke-dasharray="1,1"/><circle cx="270" cy="169" r="5.5" fill="none" stroke="#e02020" stroke-width="0.9" stroke-dasharray="1,1"/><path d="M264.5,169.5 L270.5,169.5 L270.5,175 Q266,175 264.5,171 Z" fill="#a8c4e0" stroke="#111" stroke-width="1.2"/><rect x="261" y="189" width="10" height="10" fill="#a8c4e0" stroke="#111" stroke-width="1.3"/><circle cx="270" cy="189" r="5.5" fill="#a8c4e0" stroke="#111" stroke-width="1.3"/><path d="M265,189 L271,189 L271,194 Q265,194 265,189 Z" fill="#f8f8f5"/><rect x="261" y="210" width="10" height="10" fill="#a8c4e0" stroke="#111" stroke-width="1.3"/><circle cx="270" cy="210" r="5.5" fill="none" stroke="#e02020" stroke-width="0.9" stroke-dasharray="1,1"/><path d="M265,210 Q266,215 271,215" fill="none" stroke="#111" stroke-width="1"/><path d="M261,232 L265,232 Q266,237 271,238 L271,241 L261,241 Z" fill="none" stroke="#111" stroke-width="1.2"/><circle cx="270" cy="231" r="5.5" fill="none" stroke="#e02020" stroke-width="0.9" stroke-dasharray="1,1"/><rect x="261" y="261" width="10" height="10" fill="#a8c4e0" stroke="#0000ff" stroke-width="1.3"/><circle cx="270" cy="260" r="5.5" fill="#a8c4e0" stroke="#0000ff" stroke-width="1.3"/><rect x="261" y="282" width="10" height="10" fill="#a8c4e0" stroke="#0000ff" stroke-width="1.3"/><circle cx="270" cy="281" r="5.5" fill="#a8c4e0" stroke="#0000ff" stroke-width="1.3"/><path d="M260,308.2 Q274,309.2 277,322.2 L269,322.2 Q267,315.2 260,315.2 Z" fill="#a8c0dc"/><path d="M260,308.2 Q274,309.2 277,322.2" stroke="#222" stroke-width="1" fill="none"/><path d="M266,309.2 L271,314.2 L267,315.2 Z" fill="#111"/><path d="M260,329.5 Q274,330.5 277,343.5 L269,343.5 Q267,336.5 260,336.5 Z" fill="#a8c0dc"/><path d="M260,329.5 Q274,330.5 277,343.5" stroke="#222" stroke-width="1" fill="none"/><path d="M264,333.5 L270,335.5 L268,339.5 Z" fill="#111"/><path d="M260,350.5 Q274,351.5 277,364.5 L269,364.5 Q267,357.5 260,357.5 Z" fill="#a8c0dc"/><path d="M260,350.5 Q274,351.5 277,364.5" stroke="#222" stroke-width="1" fill="none"/><rect x="266" y="354.5" width="3" height="3" fill="#fff" stroke="#0000ff"/><path d="M260,371.7 Q274,372.7 277,385.7 L269,385.7 Q267,378.7 260,378.7 Z" fill="#a8c0dc"/><path d="M260,371.7 Q274,372.7 277,385.7" stroke="#222" stroke-width="1" fill="none"/><rect x="269" y="372.7" width="3" height="3" fill="#fff" stroke="#0000ff"/><path d="M261,403 L263,399 L265,403 L267,399 L269,403 L271,400 L274,402" stroke="#222" stroke-width="1" fill="none"/><path d="M261,408 Q265,405 268,408 Q272,411 276,408" stroke="#222" stroke-width="1" fill="none"/><line x1="260" y1="413" x2="276" y2="413" stroke="#222"/><path d="M262,422.5 L274,422.5 M262,431.5 L274,431.5" stroke="#222" stroke-width="1"/><path d="M274,420.5 L277,422.5 L274,424.5 Z M262,429.5 L259,431.5 L262,433.5 Z" fill="#222"/><path d="M261,435 Q264,426 276,420" stroke="#777" fill="none"/><rect x="265.5" y="425.5" width="3" height="3" fill="#fff" stroke="#0000ff"/><path d="M328.5,159.5 L328.5,175 L332,171.5 L334.5,177 L337,176 L334.5,170.5 L339.5,170.5 Z" fill="#000" stroke="#fff" stroke-width="1" stroke-linejoin="round"/></svg>
</body></html>
